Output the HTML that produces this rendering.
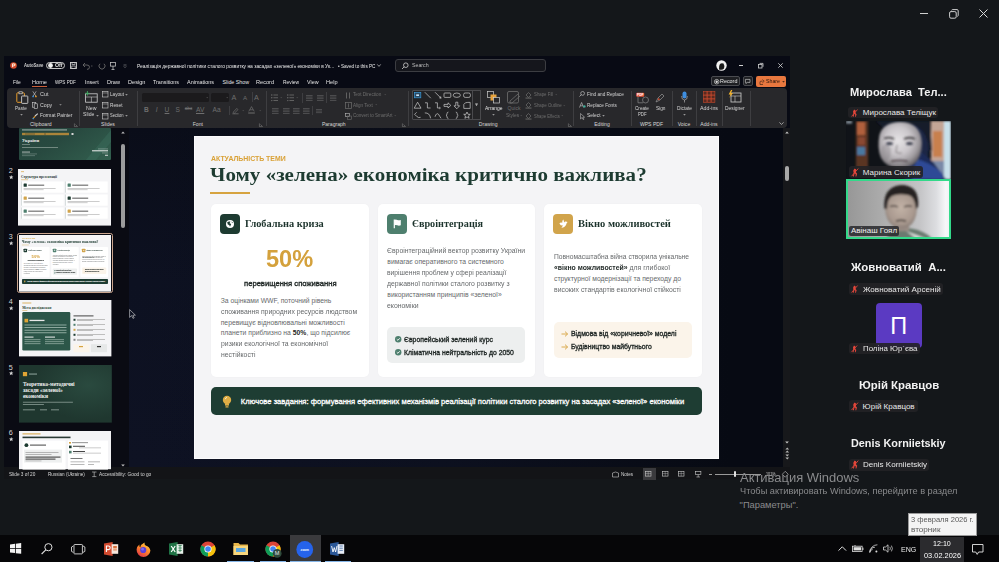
<!DOCTYPE html>
<html><head><meta charset="utf-8">
<style>
*{margin:0;padding:0;box-sizing:border-box}
html,body{width:999px;height:562px;overflow:hidden;background:#14171a;font-family:"Liberation Sans",sans-serif;position:relative}
.a{position:absolute}
.t{position:absolute;white-space:pre;line-height:1}
svg.a{overflow:visible}
</style></head><body>
<div class="a" style="left:919.80px;top:13.00px;width:8.00px;height:1.00px;background:#cfcfcf;"></div>
<svg class="a" style="left:948.50px;top:8.50px;" width="10.00" height="10.00" viewBox="0 0 10.00 10.00"><rect x="0.6" y="2.6" width="6.6" height="6.6" rx="1.4" stroke="#cfcfcf" stroke-width="1" fill="none"/><path d="M2.6 1.4 Q2.8 0.6 3.6 0.6 L8 0.6 Q9.2 0.6 9.2 1.8 L9.2 6.4 Q9.2 7.2 8.4 7.4" stroke="#cfcfcf" stroke-width="1" fill="none"/></svg>
<svg class="a" style="left:979.00px;top:9.00px;" width="9.00" height="9.00" viewBox="0 0 9.00 9.00"><path d="M0.5 0.5 L8.5 8.5 M8.5 0.5 L0.5 8.5" stroke="#d8d8d8" stroke-width="1"/></svg>
<div class="a" style="left:4.00px;top:56.00px;width:786.00px;height:413.00px;background:#080a14;"></div>
<div class="a" style="left:7.00px;top:88.00px;width:780.00px;height:40.00px;background:#28282b;border-radius:4px;"></div>
<div class="a" style="left:4.00px;top:128.00px;width:125.00px;height:341.00px;background:#0a0b13;"></div>
<div class="a" style="left:129.00px;top:128.00px;width:654.00px;height:339.00px;background:linear-gradient(90deg,rgba(8,11,21,0) 0%,rgba(8,11,21,0.3) 50%,rgba(7,10,19,1) 92%), linear-gradient(180deg,#0a0d19 0%,#0d1121 45%,#0e1223 100%);"></div>
<div class="a" style="left:783.00px;top:128.00px;width:7.00px;height:339.00px;background:#17181b;"></div>
<svg class="a" style="left:784.70px;top:131.00px;" width="4.00" height="3.00" viewBox="0 0 4.00 3.00"><path d="M0.2 2.6 L2 0.4 L3.8 2.6Z" fill="#c8c8c8"/></svg>
<div class="a" style="left:785.00px;top:165.70px;width:4.00px;height:15.40px;background:#a8a8a8;border-radius:2px;"></div>
<svg class="a" style="left:784.70px;top:440.60px;" width="4.00" height="3.00" viewBox="0 0 4.00 3.00"><path d="M0.2 0.4 L2 2.6 L3.8 0.4Z" fill="#c8c8c8"/></svg>
<svg class="a" style="left:784.50px;top:446.50px;" width="4.50" height="6.00" viewBox="0 0 4.50 6.00"><path d="M0.4 2.4 L2.25 0.4 L4.1 2.4Z M0.4 5.6 L2.25 3.6 L4.1 5.6Z" fill="#b8b8b8"/></svg>
<svg class="a" style="left:784.50px;top:453.50px;" width="4.50" height="6.00" viewBox="0 0 4.50 6.00"><path d="M0.4 0.4 L2.25 2.4 L4.1 0.4Z M0.4 3.6 L2.25 5.6 L4.1 3.6Z" fill="#b8b8b8"/></svg>
<div class="a" style="left:4.00px;top:467.00px;width:786.00px;height:12.00px;background:#131417;"></div>
<svg class="a" style="left:10.40px;top:62.00px;" width="7.00" height="7.00" viewBox="0 0 7.00 7.00"><circle cx="3.5" cy="3.5" r="3.3" fill="#d24a2c"/><circle cx="4.6" cy="2.6" r="1.4" fill="#f08a4a"/><path d="M2.5 1.8 L2.5 5.2 M2.5 1.8 L3.8 1.8 Q4.8 1.8 4.8 2.9 Q4.8 3.9 3.8 3.9 L2.5 3.9" stroke="#fff" stroke-width="0.8" fill="none"/></svg>
<div class="t" style="left:24.00px;top:62.98px;font-size:5.10px;color:#d0d0d0;font-weight:700;transform:scaleX(0.8205);transform-origin:0 0;">AutoSave</div>
<div class="a" style="left:46.20px;top:61.50px;width:18.80px;height:7.80px;background:#0b0c12;border:1px solid #c8c8c8;border-radius:4px;"></div>
<svg class="a" style="left:47.80px;top:62.90px;" width="5.00" height="5.00" viewBox="0 0 5.00 5.00"><circle cx="2.5" cy="2.5" r="2.4" fill="#f0f0f0"/></svg>
<div class="t" style="left:54.60px;top:63.07px;font-size:5.00px;color:#e0e0e0;font-weight:700;transform:scaleX(1.0527);transform-origin:0 0;">Off</div>
<svg class="a" style="left:70.30px;top:62.00px;" width="7.00" height="7.00" viewBox="0 0 7.00 7.00"><rect x="0.5" y="0.5" width="6" height="6" stroke="#cfcfcf" stroke-width="0.9" fill="none"/><rect x="2" y="0.5" width="3" height="2" stroke="#cfcfcf" stroke-width="0.7" fill="none"/><rect x="1.8" y="4" width="3.4" height="2.5" stroke="#cfcfcf" stroke-width="0.7" fill="none"/></svg>
<svg class="a" style="left:82.00px;top:61.50px;" width="11.00" height="8.00" viewBox="0 0 11.00 8.00"><path d="M3 1 L1 3 L3 5 M1 3 L5 3 Q7.5 3 7.5 5.2 Q7.5 7.4 5 7.4" stroke="#6a6a6a" stroke-width="0.9" fill="none"/><path d="M9 4 L10.5 4" stroke="#6a6a6a" stroke-width="0.7"/></svg>
<svg class="a" style="left:97.50px;top:61.50px;" width="8.00" height="8.00" viewBox="0 0 8.00 8.00"><path d="M6 1.8 A3 3 0 1 1 2 1.8" stroke="#6a6a6a" stroke-width="0.9" fill="none"/></svg>
<svg class="a" style="left:110.00px;top:61.50px;" width="6.00" height="8.00" viewBox="0 0 6.00 8.00"><rect x="0.5" y="0.5" width="5" height="3.6" stroke="#bdbdbd" stroke-width="0.8" fill="none"/><path d="M3 4 L3 7.5 M1.5 7.5 L4.5 7.5" stroke="#bdbdbd" stroke-width="0.8"/></svg>
<svg class="a" style="left:123.00px;top:63.50px;" width="4.00" height="4.00" viewBox="0 0 4.00 4.00"><path d="M0.5 1 L3.5 1 M0.8 2.4 L2 3.6 L3.2 2.4" stroke="#9a9a9a" stroke-width="0.6" fill="none"/></svg>
<div class="t" style="left:136.60px;top:63.78px;font-size:5.10px;color:#ececec;transform:scaleX(0.9579);transform-origin:0 0;">Реалізація державної політики сталого розвитку на засадах «зеленої» економіки в Ук...</div>
<div class="t" style="left:337.50px;top:63.78px;font-size:5.10px;color:#ececec;transform:scaleX(0.9104);transform-origin:0 0;">• Saved to this PC</div>
<svg class="a" style="left:376.50px;top:63.80px;" width="4.00" height="3.00" viewBox="0 0 4.00 3.00"><path d="M0.3 0.4 L2 2.4 L3.7 0.4" stroke="#cfcfcf" stroke-width="0.7" fill="none"/></svg>
<div class="a" style="left:395.00px;top:59.00px;width:150.50px;height:13.00px;background:#15161c;border:1px solid #3c3d42;border-radius:3px;"></div>
<svg class="a" style="left:400.50px;top:62.00px;" width="8.00" height="8.00" viewBox="0 0 8.00 8.00"><circle cx="4.8" cy="3.2" r="2.3" stroke="#cfcfcf" stroke-width="0.8" fill="none"/><path d="M3.2 4.8 L1 7" stroke="#cfcfcf" stroke-width="0.8"/></svg>
<div class="t" style="left:412.00px;top:63.31px;font-size:5.30px;color:#bdbdbd;transform:scaleX(0.9885);transform-origin:0 0;">Search</div>
<svg class="a" style="left:716.00px;top:60.00px;" width="11.00" height="11.00" viewBox="0 0 11.00 11.00"><circle cx="5.5" cy="5.5" r="5.2" fill="#f2f2f2"/><path d="M3 9.5 Q2.5 6 4 4 Q5.5 2.5 7.5 3.6 Q8.8 5.4 8 8.6 Q6.5 10.4 3 9.5Z" fill="#1a1a1a"/></svg>
<div class="a" style="left:738.70px;top:65.00px;width:4.50px;height:0.90px;background:#d0d0d0;"></div>
<svg class="a" style="left:757.50px;top:62.50px;" width="5.50" height="5.50" viewBox="0 0 5.50 5.50"><rect x="0.4" y="1.4" width="3.6" height="3.6" stroke="#d0d0d0" stroke-width="0.8" fill="none"/><path d="M1.6 0.4 L5 0.4 L5 3.8" stroke="#d0d0d0" stroke-width="0.8" fill="none"/></svg>
<svg class="a" style="left:777.60px;top:62.50px;" width="5.00" height="5.00" viewBox="0 0 5.00 5.00"><path d="M0.3 0.3 L4.7 4.7 M4.7 0.3 L0.3 4.7" stroke="#d8d8d8" stroke-width="0.8"/></svg>
<div class="a" style="left:711.00px;top:76.40px;width:28.60px;height:10.00px;background:#1e1f23;border:1px solid #4a4b50;border-radius:2px;"></div>
<svg class="a" style="left:714.00px;top:78.60px;" width="5.00" height="5.40" viewBox="0 0 5.00 5.40"><circle cx="2.7" cy="2.7" r="2.3" stroke="#d8d8d8" stroke-width="0.7" fill="none"/><circle cx="2.7" cy="2.7" r="1.2" fill="#d8d8d8"/></svg>
<div class="t" style="left:720.40px;top:79.18px;font-size:5.10px;color:#e8e8e8;transform:scaleX(1.0584);transform-origin:0 0;">Record</div>
<div class="a" style="left:743.00px;top:76.40px;width:9.80px;height:10.00px;background:#1e1f23;border:1px solid #4a4b50;border-radius:2px;"></div>
<svg class="a" style="left:745.20px;top:78.80px;" width="5.00" height="5.00" viewBox="0 0 5.00 5.00"><path d="M0.4 0.4 L5 0.4 L5 3.4 L2.2 3.4 L0.9 4.6 L0.9 3.4 L0.4 3.4Z" stroke="#d8d8d8" stroke-width="0.6" fill="none"/></svg>
<div class="a" style="left:756.00px;top:76.20px;width:30.20px;height:10.60px;background:#e8773f;border-radius:2px;"></div>
<svg class="a" style="left:758.50px;top:78.60px;" width="6.00" height="6.00" viewBox="0 0 6.00 6.00"><path d="M1 5.5 L1 3 Q1 2.2 2 2.2 L3.6 2.2 M3.4 0.6 L5.2 2.2 L3.4 3.8 M4 5.5 L1 5.5" stroke="#2a1a10" stroke-width="0.6" fill="none"/></svg>
<div class="t" style="left:765.50px;top:79.28px;font-size:5.10px;color:#22140c;transform:scaleX(1.0287);transform-origin:0 0;">Share</div>
<svg class="a" style="left:781.50px;top:80.80px;" width="3.00" height="2.00" viewBox="0 0 3.00 2.00"><path d="M0.2 0.3 L1.5 1.6 L2.8 0.3Z" fill="#22140c"/></svg>
<div class="t" style="left:13.00px;top:79.81px;font-size:5.30px;color:#e4e4e4;transform:scaleX(0.9133);transform-origin:0 0;">File</div>
<div class="t" style="left:31.90px;top:79.81px;font-size:5.30px;color:#e4e4e4;transform:scaleX(1.0539);transform-origin:0 0;">Home</div>
<div class="t" style="left:55.30px;top:79.81px;font-size:5.30px;color:#e4e4e4;transform:scaleX(0.8615);transform-origin:0 0;">WPS PDF</div>
<div class="t" style="left:85.20px;top:79.81px;font-size:5.30px;color:#e4e4e4;transform:scaleX(1.0336);transform-origin:0 0;">Insert</div>
<div class="t" style="left:106.70px;top:79.81px;font-size:5.30px;color:#e4e4e4;transform:scaleX(1.0511);transform-origin:0 0;">Draw</div>
<div class="t" style="left:127.50px;top:79.81px;font-size:5.30px;color:#e4e4e4;transform:scaleX(1.0607);transform-origin:0 0;">Design</div>
<div class="t" style="left:152.50px;top:79.81px;font-size:5.30px;color:#e4e4e4;transform:scaleX(1.0107);transform-origin:0 0;">Transitions</div>
<div class="t" style="left:186.50px;top:79.81px;font-size:5.30px;color:#e4e4e4;transform:scaleX(1.0298);transform-origin:0 0;">Animations</div>
<div class="t" style="left:222.50px;top:79.81px;font-size:5.30px;color:#e4e4e4;">Slide Show</div>
<div class="t" style="left:256.00px;top:79.81px;font-size:5.30px;color:#e4e4e4;transform:scaleX(1.0535);transform-origin:0 0;">Record</div>
<div class="t" style="left:282.50px;top:79.81px;font-size:5.30px;color:#e4e4e4;transform:scaleX(0.9207);transform-origin:0 0;">Review</div>
<div class="t" style="left:307.00px;top:79.81px;font-size:5.30px;color:#e4e4e4;transform:scaleX(1.0095);transform-origin:0 0;">View</div>
<div class="t" style="left:325.50px;top:79.81px;font-size:5.30px;color:#e4e4e4;transform:scaleX(1.0550);transform-origin:0 0;">Help</div>
<div class="a" style="left:32.00px;top:85.60px;width:14.80px;height:1.30px;background:#c9603a;"></div>
<div class="t" style="left:29.89px;top:121.88px;font-size:5.10px;color:#d8d8d8;">Clipboard</div>
<div class="t" style="left:101.05px;top:121.88px;font-size:5.10px;color:#d8d8d8;">Slides</div>
<div class="t" style="left:192.70px;top:121.88px;font-size:5.10px;color:#d8d8d8;">Font</div>
<div class="t" style="left:321.89px;top:121.88px;font-size:5.10px;color:#d8d8d8;">Paragraph</div>
<div class="t" style="left:478.85px;top:121.88px;font-size:5.10px;color:#d8d8d8;">Drawing</div>
<div class="t" style="left:594.20px;top:121.88px;font-size:5.10px;color:#d8d8d8;">Editing</div>
<div class="t" style="left:639.88px;top:121.88px;font-size:5.10px;color:#d8d8d8;">WPS PDF</div>
<div class="t" style="left:677.76px;top:121.88px;font-size:5.10px;color:#d8d8d8;">Voice</div>
<div class="t" style="left:700.35px;top:121.88px;font-size:5.10px;color:#d8d8d8;">Add-ins</div>
<div class="a" style="left:78.80px;top:91.00px;width:0.80px;height:35.00px;background:#3e3e41;"></div>
<div class="a" style="left:137.30px;top:91.00px;width:0.80px;height:35.00px;background:#3e3e41;"></div>
<div class="a" style="left:265.50px;top:91.00px;width:0.80px;height:35.00px;background:#3e3e41;"></div>
<div class="a" style="left:407.80px;top:91.00px;width:0.80px;height:35.00px;background:#3e3e41;"></div>
<div class="a" style="left:573.30px;top:91.00px;width:0.80px;height:35.00px;background:#3e3e41;"></div>
<div class="a" style="left:630.60px;top:91.00px;width:0.80px;height:35.00px;background:#3e3e41;"></div>
<div class="a" style="left:672.40px;top:91.00px;width:0.80px;height:35.00px;background:#3e3e41;"></div>
<div class="a" style="left:695.50px;top:91.00px;width:0.80px;height:35.00px;background:#3e3e41;"></div>
<div class="a" style="left:722.00px;top:91.00px;width:0.80px;height:35.00px;background:#3e3e41;"></div>
<div class="a" style="left:749.50px;top:91.00px;width:0.80px;height:35.00px;background:#3e3e41;"></div>
<svg class="a" style="left:73.60px;top:122.60px;" width="4.00" height="4.00" viewBox="0 0 4.00 4.00"><path d="M0.4 0.4 L0.4 3.6 L3.6 3.6 M1.5 1.5 L3.4 3.4" stroke="#8a8a8a" stroke-width="0.5" fill="none"/></svg>
<svg class="a" style="left:258.50px;top:122.60px;" width="4.00" height="4.00" viewBox="0 0 4.00 4.00"><path d="M0.4 0.4 L0.4 3.6 L3.6 3.6 M1.5 1.5 L3.4 3.4" stroke="#8a8a8a" stroke-width="0.5" fill="none"/></svg>
<svg class="a" style="left:402.40px;top:122.60px;" width="4.00" height="4.00" viewBox="0 0 4.00 4.00"><path d="M0.4 0.4 L0.4 3.6 L3.6 3.6 M1.5 1.5 L3.4 3.4" stroke="#8a8a8a" stroke-width="0.5" fill="none"/></svg>
<svg class="a" style="left:568.00px;top:122.60px;" width="4.00" height="4.00" viewBox="0 0 4.00 4.00"><path d="M0.4 0.4 L0.4 3.6 L3.6 3.6 M1.5 1.5 L3.4 3.4" stroke="#8a8a8a" stroke-width="0.5" fill="none"/></svg>
<svg class="a" style="left:15.50px;top:91.00px;" width="13.00" height="13.00" viewBox="0 0 13.00 13.00"><rect x="0.8" y="1.8" width="7.6" height="9.5" rx="0.8" stroke="#e39a2c" stroke-width="1" fill="none"/><rect x="3" y="0.8" width="3.2" height="2" fill="#28282b" stroke="#cfcfcf" stroke-width="0.7"/><rect x="5.6" y="5" width="6.2" height="7.4" rx="0.6" fill="#28282b" stroke="#cfcfcf" stroke-width="0.9"/></svg>
<div class="t" style="left:15.00px;top:105.78px;font-size:5.10px;color:#d6d6d6;transform:scaleX(0.9048);transform-origin:0 0;">Paste</div>
<svg class="a" style="left:19.60px;top:114.20px;" width="3.00" height="2.00" viewBox="0 0 3.00 2.00"><path d="M0.2 0.3 L1.5 1.6 L2.8 0.3Z" fill="#bdbdbd"/></svg>
<svg class="a" style="left:32.00px;top:91.20px;" width="5.00" height="6.50" viewBox="0 0 5.00 6.50"><path d="M0.8 0.3 L3.8 5 M4.2 0.3 L1.2 5" stroke="#cfcfcf" stroke-width="0.6"/><circle cx="1.1" cy="5.4" r="0.9" fill="#3a8fd8"/><circle cx="3.9" cy="5.4" r="0.9" fill="#e39a2c"/></svg>
<div class="t" style="left:39.80px;top:92.08px;font-size:5.10px;color:#d6d6d6;transform:scaleX(1.0584);transform-origin:0 0;">Cut</div>
<svg class="a" style="left:31.80px;top:101.80px;" width="6.00" height="7.00" viewBox="0 0 6.00 7.00"><rect x="0.4" y="0.4" width="3.4" height="4.8" stroke="#cfcfcf" stroke-width="0.6" fill="none"/><rect x="2.2" y="1.8" width="3.4" height="4.8" fill="#28282b" stroke="#cfcfcf" stroke-width="0.6"/></svg>
<div class="t" style="left:39.80px;top:102.88px;font-size:5.10px;color:#d6d6d6;transform:scaleX(1.0247);transform-origin:0 0;">Copy</div>
<svg class="a" style="left:59.00px;top:104.40px;" width="3.00" height="2.00" viewBox="0 0 3.00 2.00"><path d="M0.2 0.3 L1.5 1.6 L2.8 0.3Z" fill="#9a9a9a"/></svg>
<svg class="a" style="left:31.80px;top:112.60px;" width="6.50" height="6.50" viewBox="0 0 6.50 6.50"><path d="M1 5.6 L3.2 3.2" stroke="#e39a2c" stroke-width="1.2"/><path d="M3 3 L5.8 0.6" stroke="#cfcfcf" stroke-width="1.1"/><circle cx="1.2" cy="5.6" r="0.8" fill="#3a8fd8"/></svg>
<div class="t" style="left:39.80px;top:113.48px;font-size:5.10px;color:#d6d6d6;transform:scaleX(0.9636);transform-origin:0 0;">Format Painter</div>
<svg class="a" style="left:84.50px;top:90.50px;" width="13.00" height="12.00" viewBox="0 0 13.00 12.00"><rect x="0.6" y="2.8" width="11.6" height="8.4" stroke="#cfcfcf" stroke-width="0.8" fill="none"/><path d="M0.6 6 L12.2 6 M6.4 6 L6.4 11.2" stroke="#cfcfcf" stroke-width="0.6"/><path d="M2.4 0 L2.4 4.6 M0.1 2.3 L4.7 2.3" stroke="#3fae62" stroke-width="0.9"/></svg>
<div class="t" style="left:85.60px;top:105.68px;font-size:5.10px;color:#d6d6d6;transform:scaleX(1.0194);transform-origin:0 0;">New</div>
<div class="t" style="left:83.00px;top:112.38px;font-size:5.10px;color:#d6d6d6;transform:scaleX(1.0052);transform-origin:0 0;">Slide</div>
<svg class="a" style="left:95.60px;top:114.80px;" width="3.00" height="2.00" viewBox="0 0 3.00 2.00"><path d="M0.2 0.3 L1.5 1.6 L2.8 0.3Z" fill="#bdbdbd"/></svg>
<svg class="a" style="left:101.80px;top:91.20px;" width="6.40" height="6.40" viewBox="0 0 6.40 6.40"><rect x="0.4" y="0.4" width="5.6" height="5.6" stroke="#cfcfcf" stroke-width="0.6" fill="none"/><path d="M0.4 2 L6 2" stroke="#cfcfcf" stroke-width="0.5"/></svg>
<div class="t" style="left:110.00px;top:92.08px;font-size:5.10px;color:#d6d6d6;transform:scaleX(0.9143);transform-origin:0 0;">Layout</div>
<svg class="a" style="left:125.00px;top:93.80px;" width="3.00" height="2.00" viewBox="0 0 3.00 2.00"><path d="M0.2 0.3 L1.5 1.6 L2.8 0.3Z" fill="#bdbdbd"/></svg>
<svg class="a" style="left:101.80px;top:101.90px;" width="6.40" height="6.40" viewBox="0 0 6.40 6.40"><rect x="0.4" y="0.4" width="5.6" height="5.6" stroke="#cfcfcf" stroke-width="0.6" fill="none"/><path d="M0.4 2 L6 2" stroke="#cfcfcf" stroke-width="0.5"/></svg>
<div class="t" style="left:110.00px;top:102.78px;font-size:5.10px;color:#d6d6d6;transform:scaleX(0.9382);transform-origin:0 0;">Reset</div>
<svg class="a" style="left:101.80px;top:112.60px;" width="6.40" height="6.40" viewBox="0 0 6.40 6.40"><rect x="0.4" y="0.4" width="5.6" height="5.6" stroke="#cfcfcf" stroke-width="0.6" fill="none"/><path d="M0.4 2 L6 2" stroke="#cfcfcf" stroke-width="0.5"/></svg>
<div class="t" style="left:110.00px;top:113.48px;font-size:5.10px;color:#d6d6d6;transform:scaleX(0.7936);transform-origin:0 0;">Section</div>
<svg class="a" style="left:124.50px;top:115.20px;" width="3.00" height="2.00" viewBox="0 0 3.00 2.00"><path d="M0.2 0.3 L1.5 1.6 L2.8 0.3Z" fill="#bdbdbd"/></svg>
<div class="a" style="left:142.00px;top:93.00px;width:66.80px;height:8.70px;background:#1b1a1c;border-radius:1.5px;"></div>
<div class="a" style="left:211.40px;top:93.00px;width:17.30px;height:8.70px;background:#1b1a1c;border-radius:1.5px;"></div>
<svg class="a" style="left:205.50px;top:96.60px;" width="2.50" height="1.60" viewBox="0 0 2.50 1.60"><path d="M0.2 0.2 L1.25 1.3 L2.3 0.2Z" fill="#555"/></svg>
<svg class="a" style="left:225.50px;top:96.60px;" width="2.50" height="1.60" viewBox="0 0 2.50 1.60"><path d="M0.2 0.2 L1.25 1.3 L2.3 0.2Z" fill="#555"/></svg>
<div class="t" style="left:231.50px;top:94.10px;font-size:7.20px;color:#6e6e6e;">A</div>
<div class="t" style="left:243.00px;top:94.95px;font-size:6.20px;color:#6e6e6e;">A</div>
<div class="a" style="left:251.60px;top:92.00px;width:0.60px;height:10.00px;background:#3e3e41;"></div>
<div class="t" style="left:254.00px;top:94.10px;font-size:7.20px;color:#6e6e6e;">A</div>
<div class="t" style="left:144.00px;top:107.21px;font-size:6.60px;color:#6e6e6e;font-weight:700;">B</div>
<div class="t" style="left:155.80px;top:107.21px;font-size:6.60px;color:#6e6e6e;font-style:italic;">I</div>
<div class="t" style="left:164.60px;top:107.21px;font-size:6.60px;color:#6e6e6e;text-decoration:underline;">U</div>
<div class="t" style="left:175.60px;top:107.21px;font-size:6.60px;color:#6e6e6e;">S</div>
<div class="t" style="left:184.80px;top:107.21px;font-size:6.60px;color:#6e6e6e;text-decoration:line-through;font-size:4.6px;">abc</div>
<div class="t" style="left:196.00px;top:107.21px;font-size:6.60px;color:#6e6e6e;text-decoration:underline;">AV</div>
<div class="t" style="left:212.50px;top:107.21px;font-size:6.60px;color:#6e6e6e;">Aa</div>
<div class="a" style="left:228.50px;top:106.00px;width:0.60px;height:9.00px;background:#3e3e41;"></div>
<svg class="a" style="left:232.00px;top:106.50px;" width="7.00" height="7.00" viewBox="0 0 7.00 7.00"><path d="M1 5.4 L4.8 1.4 L6 2.6 L2.2 6.4Z" stroke="#6e6e6e" stroke-width="0.7" fill="none"/><path d="M0.4 6.8 L6.6 6.8" stroke="#6e6e6e" stroke-width="0.8"/></svg>
<svg class="a" style="left:248.00px;top:106.20px;" width="7.00" height="7.50" viewBox="0 0 7.00 7.50"><path d="M0.8 5.4 L3.5 0.6 L6.2 5.4 M1.8 3.8 L5.2 3.8" stroke="#6e6e6e" stroke-width="0.7" fill="none"/><path d="M0.2 7 L6.8 7" stroke="#6e6e6e" stroke-width="1"/></svg>
<svg class="a" style="left:242.20px;top:109.80px;" width="2.50" height="1.60" viewBox="0 0 2.50 1.60"><path d="M0.2 0.2 L1.25 1.3 L2.3 0.2Z" fill="#555"/></svg>
<svg class="a" style="left:259.00px;top:109.80px;" width="2.50" height="1.60" viewBox="0 0 2.50 1.60"><path d="M0.2 0.2 L1.25 1.3 L2.3 0.2Z" fill="#555"/></svg>
<svg class="a" style="left:270.80px;top:94.00px;" width="7.00" height="8.00" viewBox="0 0 7.00 8.00"><circle cx="0.8" cy="1" r="0.7" fill="#6e6e6e"/><circle cx="0.8" cy="3.8" r="0.7" fill="#6e6e6e"/><circle cx="0.8" cy="6.6" r="0.7" fill="#6e6e6e"/><rect x="2.4" y="0.6" width="4.6" height="0.8" fill="#6e6e6e"/><rect x="2.4" y="3.4" width="4.6" height="0.8" fill="#6e6e6e"/><rect x="2.4" y="6.2" width="4.6" height="0.8" fill="#6e6e6e"/></svg>
<svg class="a" style="left:280.00px;top:97.40px;" width="2.50" height="1.60" viewBox="0 0 2.50 1.60"><path d="M0.2 0.2 L1.25 1.3 L2.3 0.2Z" fill="#555"/></svg>
<svg class="a" style="left:287.00px;top:94.00px;" width="7.00" height="8.00" viewBox="0 0 7.00 8.00"><circle cx="0.8" cy="1" r="0.7" fill="#6e6e6e"/><circle cx="0.8" cy="3.8" r="0.7" fill="#6e6e6e"/><circle cx="0.8" cy="6.6" r="0.7" fill="#6e6e6e"/><rect x="2.4" y="0.6" width="4.6" height="0.8" fill="#6e6e6e"/><rect x="2.4" y="3.4" width="4.6" height="0.8" fill="#6e6e6e"/><rect x="2.4" y="6.2" width="4.6" height="0.8" fill="#6e6e6e"/></svg>
<svg class="a" style="left:296.20px;top:97.40px;" width="2.50" height="1.60" viewBox="0 0 2.50 1.60"><path d="M0.2 0.2 L1.25 1.3 L2.3 0.2Z" fill="#555"/></svg>
<div class="a" style="left:302.00px;top:93.00px;width:0.60px;height:10.00px;background:#3e3e41;"></div>
<svg class="a" style="left:306.00px;top:95.00px;" width="6.60" height="6.80" viewBox="0 0 6.60 6.80"><rect x="0.0" y="0.0" width="6.6" height="0.7" fill="#5c5c5e"/><rect x="0.0" y="1.7" width="6.6" height="0.7" fill="#5c5c5e"/><rect x="0.0" y="3.4" width="6.6" height="0.7" fill="#5c5c5e"/><rect x="0.0" y="5.1" width="6.6" height="0.7" fill="#5c5c5e"/></svg>
<svg class="a" style="left:316.50px;top:95.00px;" width="6.60" height="6.80" viewBox="0 0 6.60 6.80"><rect x="0.0" y="0.0" width="6.6" height="0.7" fill="#5c5c5e"/><rect x="0.0" y="1.7" width="6.6" height="0.7" fill="#5c5c5e"/><rect x="0.0" y="3.4" width="6.6" height="0.7" fill="#5c5c5e"/><rect x="0.0" y="5.1" width="6.6" height="0.7" fill="#5c5c5e"/></svg>
<div class="a" style="left:325.50px;top:92.00px;width:0.60px;height:11.00px;background:#3e3e41;"></div>
<svg class="a" style="left:329.60px;top:95.00px;" width="6.40" height="6.80" viewBox="0 0 6.40 6.80"><rect x="0.0" y="0.0" width="6.4" height="0.7" fill="#5c5c5e"/><rect x="0.0" y="1.7" width="6.4" height="0.7" fill="#5c5c5e"/><rect x="0.0" y="3.4" width="6.4" height="0.7" fill="#5c5c5e"/><rect x="0.0" y="5.1" width="6.4" height="0.7" fill="#5c5c5e"/></svg>
<svg class="a" style="left:271.50px;top:107.80px;" width="6.60" height="6.80" viewBox="0 0 6.60 6.80"><rect x="0.0" y="0.0" width="6.6" height="0.7" fill="#5c5c5e"/><rect x="0.0" y="1.7" width="6.6" height="0.7" fill="#5c5c5e"/><rect x="0.0" y="3.4" width="6.6" height="0.7" fill="#5c5c5e"/><rect x="0.0" y="5.1" width="6.6" height="0.7" fill="#5c5c5e"/></svg>
<svg class="a" style="left:282.50px;top:107.80px;" width="6.60" height="6.80" viewBox="0 0 6.60 6.80"><rect x="0.0" y="0.0" width="6.6" height="0.7" fill="#5c5c5e"/><rect x="0.0" y="1.7" width="6.6" height="0.7" fill="#5c5c5e"/><rect x="0.0" y="3.4" width="6.6" height="0.7" fill="#5c5c5e"/><rect x="0.0" y="5.1" width="6.6" height="0.7" fill="#5c5c5e"/></svg>
<svg class="a" style="left:292.50px;top:107.80px;" width="6.60" height="6.80" viewBox="0 0 6.60 6.80"><rect x="0.0" y="0.0" width="6.6" height="0.7" fill="#5c5c5e"/><rect x="0.0" y="1.7" width="6.6" height="0.7" fill="#5c5c5e"/><rect x="0.0" y="3.4" width="6.6" height="0.7" fill="#5c5c5e"/><rect x="0.0" y="5.1" width="6.6" height="0.7" fill="#5c5c5e"/></svg>
<svg class="a" style="left:303.00px;top:107.80px;" width="6.60" height="6.80" viewBox="0 0 6.60 6.80"><rect x="0.0" y="0.0" width="6.6" height="0.7" fill="#5c5c5e"/><rect x="0.0" y="1.7" width="6.6" height="0.7" fill="#5c5c5e"/><rect x="0.0" y="3.4" width="6.6" height="0.7" fill="#5c5c5e"/><rect x="0.0" y="5.1" width="6.6" height="0.7" fill="#5c5c5e"/></svg>
<div class="a" style="left:312.00px;top:106.00px;width:0.60px;height:9.00px;background:#3e3e41;"></div>
<svg class="a" style="left:315.50px;top:108.60px;" width="6.00" height="5.10" viewBox="0 0 6.00 5.10"><rect x="0.0" y="0.0" width="6.0" height="0.7" fill="#5c5c5e"/><rect x="0.0" y="1.7" width="6.0" height="0.7" fill="#5c5c5e"/><rect x="0.0" y="3.4" width="6.0" height="0.7" fill="#5c5c5e"/></svg>
<svg class="a" style="left:345.00px;top:91.50px;" width="6.00" height="7.00" viewBox="0 0 6.00 7.00"><path d="M1.5 0.5 L1.5 6.5 M4.5 0.5 L4.5 6.5" stroke="#6e6e6e" stroke-width="0.8"/></svg>
<div class="t" style="left:353.30px;top:92.48px;font-size:5.10px;color:#6e6e6e;transform:scaleX(0.9160);transform-origin:0 0;">Text Direction</div>
<svg class="a" style="left:383.50px;top:94.20px;" width="2.50" height="1.60" viewBox="0 0 2.50 1.60"><path d="M0.2 0.2 L1.25 1.3 L2.3 0.2Z" fill="#555"/></svg>
<svg class="a" style="left:345.00px;top:102.00px;" width="7.00" height="7.00" viewBox="0 0 7.00 7.00"><rect x="0.5" y="0.5" width="6" height="6" stroke="#6e6e6e" stroke-width="0.7" fill="none"/><path d="M3.5 1.5 L3.5 5.5" stroke="#6e6e6e" stroke-width="0.7"/></svg>
<div class="t" style="left:353.30px;top:102.68px;font-size:5.10px;color:#6e6e6e;transform:scaleX(0.8947);transform-origin:0 0;">Align Text</div>
<svg class="a" style="left:374.60px;top:104.40px;" width="2.50" height="1.60" viewBox="0 0 2.50 1.60"><path d="M0.2 0.2 L1.25 1.3 L2.3 0.2Z" fill="#555"/></svg>
<svg class="a" style="left:345.00px;top:112.50px;" width="7.00" height="7.00" viewBox="0 0 7.00 7.00"><rect x="0.5" y="0.5" width="4" height="3" stroke="#bbb" stroke-width="0.6" fill="none"/><rect x="2.5" y="3" width="4" height="3.4" stroke="#6e6e6e" stroke-width="0.6" fill="none"/></svg>
<div class="t" style="left:353.30px;top:113.48px;font-size:5.10px;color:#6e6e6e;transform:scaleX(0.8788);transform-origin:0 0;">Convert to SmartArt</div>
<svg class="a" style="left:394.40px;top:115.20px;" width="2.50" height="1.60" viewBox="0 0 2.50 1.60"><path d="M0.2 0.2 L1.25 1.3 L2.3 0.2Z" fill="#555"/></svg>
<div class="a" style="left:412.20px;top:90.10px;width:69.20px;height:30.30px;background:#222224;border:0.8px solid #4a4a4d;border-radius:1px;"></div>
<div class="a" style="left:472.00px;top:90.10px;width:9.40px;height:30.30px;background:#252527;border:0.8px solid #4a4a4d;"></div>
<svg class="a" style="left:475.30px;top:104.20px;" width="3.00" height="2.40" viewBox="0 0 3.00 2.40"><path d="M0.2 0.3 L2.8 0.3 L1.5 2Z" fill="#cfcfcf"/><rect x="0.2" y="-1" width="2.6" height="0.5" fill="#cfcfcf"/></svg>
<svg class="a" style="left:412.00px;top:90.00px;" width="60.00" height="30.00" viewBox="0 0 60.00 30.00"><g transform="translate(5.6 5.2)"><rect x="-3.2" y="-2.6" width="6.4" height="5.2" stroke="#3a9ad9" stroke-width="0.7" fill="#2b4a63"/><rect x="-1.4" y="-0.8" width="2.8" height="1.6" fill="#cfe6f8"/></g><g transform="translate(15.8 5.2)"><path d="M-3 -3 L3 3" stroke="#cfcfcf" stroke-width="0.7"/></g><g transform="translate(26.0 5.2)"><path d="M-3 -3 L3 3 M3 3 L1.2 2.6 M3 3 L2.6 1.2" stroke="#cfcfcf" stroke-width="0.7" fill="none"/></g><g transform="translate(35.4 5.2)"><rect x="-3.4" y="-2.2" width="6.8" height="4.4" rx="0.8" stroke="#cfcfcf" stroke-width="0.7" fill="none"/></g><g transform="translate(44.8 5.2)"><ellipse cx="0" cy="0" rx="3.6" ry="2.2" stroke="#cfcfcf" stroke-width="0.7" fill="none"/></g><g transform="translate(55.0 5.2)"><rect x="-3.4" y="-2.2" width="6.8" height="4.4" rx="1.6" stroke="#cfcfcf" stroke-width="0.7" fill="none"/></g><g transform="translate(5.6 15.4)"><path d="M0 -3.2 L3.4 2.8 L-3.4 2.8Z" stroke="#cfcfcf" stroke-width="0.7" fill="none"/></g><g transform="translate(15.8 15.4)"><path d="M-2.8 -2.6 L-0.4 -2.6 L-0.4 2.6 L2.8 2.6" stroke="#cfcfcf" stroke-width="0.7" fill="none"/></g><g transform="translate(26.0 15.4)"><path d="M-3 -2.6 L-0.6 -2.6 L-0.6 2.6 L2.2 2.6 M1.4 1.8 L2.4 2.6 L1.4 3.4" stroke="#cfcfcf" stroke-width="0.7" fill="none"/></g><g transform="translate(35.4 15.4)"><path d="M-3.4 -1 L0.6 -1 L0.6 -2.6 L3.4 0 L0.6 2.6 L0.6 1 L-3.4 1Z" stroke="#cfcfcf" stroke-width="0.7" fill="none"/></g><g transform="translate(44.8 15.4)"><path d="M-1 -3.2 L1 -3.2 L1 0.4 L2.8 0.4 L0 3.4 L-2.8 0.4 L-1 0.4Z" stroke="#cfcfcf" stroke-width="0.7" fill="none"/></g><g transform="translate(55.0 15.4)"><path d="M-3.2 -1 Q-2 -3.2 0.8 -3 L3.2 -3 L3.2 3 L-3.2 3Z" stroke="#cfcfcf" stroke-width="0.7" fill="none"/></g><g transform="translate(5.6 25.3)"><path d="M-3 -1 L-1 -3 M-3 -1 L-1 1 Q1 3 3 2" stroke="#cfcfcf" stroke-width="0.7" fill="none"/></g><g transform="translate(15.8 25.3)"><path d="M-3 -2.4 Q2 -2.6 2.8 3" stroke="#cfcfcf" stroke-width="0.7" fill="none"/></g><g transform="translate(26.0 25.3)"><path d="M-3 1.5 Q-1.5 -3 0.5 -1 Q2 1.5 3 3" stroke="#cfcfcf" stroke-width="0.7" fill="none"/></g><g transform="translate(35.4 25.3)"><path d="M1 -3.2 Q-0.4 -3.2 -0.4 -1.6 L-0.4 -0.8 L-1.4 0 L-0.4 0.8 L-0.4 1.6 Q-0.4 3.2 1 3.2" stroke="#cfcfcf" stroke-width="0.7" fill="none"/></g><g transform="translate(44.8 25.3)"><path d="M-1 -3.2 Q0.4 -3.2 0.4 -1.6 L0.4 -0.8 L1.4 0 L0.4 0.8 L0.4 1.6 Q0.4 3.2 -1 3.2" stroke="#cfcfcf" stroke-width="0.7" fill="none"/></g><g transform="translate(55.0 25.3)"><path d="M0 -3.3 L1 -1 L3.3 -1 L1.5 0.6 L2.1 3 L0 1.6 L-2.1 3 L-1.5 0.6 L-3.3 -1 L-1 -1Z" stroke="#cfcfcf" stroke-width="0.7" fill="none"/></g></svg>
<svg class="a" style="left:487.00px;top:91.00px;" width="13.50" height="12.50" viewBox="0 0 13.50 12.50"><rect x="0.5" y="0.5" width="6" height="6" fill="#28282b" stroke="#cfcfcf" stroke-width="0.7"/><rect x="3.5" y="3.5" width="6" height="6" fill="#e8a33c"/><rect x="6.5" y="6.5" width="6" height="5.5" fill="#28282b" stroke="#cfcfcf" stroke-width="0.7"/></svg>
<div class="t" style="left:484.80px;top:105.51px;font-size:5.30px;color:#e0e0e0;transform:scaleX(0.9334);transform-origin:0 0;">Arrange</div>
<svg class="a" style="left:492.30px;top:114.00px;" width="3.00" height="2.00" viewBox="0 0 3.00 2.00"><path d="M0.2 0.3 L1.5 1.6 L2.8 0.3Z" fill="#bdbdbd"/></svg>
<svg class="a" style="left:507.00px;top:91.00px;" width="14.00" height="12.50" viewBox="0 0 14.00 12.50"><rect x="0.5" y="0.5" width="11" height="11.5" rx="1.5" stroke="#6e6e6e" stroke-width="0.8" fill="none"/><path d="M13 5 L5 12 L3 12 L3 10 L11 3" stroke="#6e6e6e" stroke-width="0.8" fill="none"/></svg>
<div class="t" style="left:507.50px;top:105.68px;font-size:5.10px;color:#6e6e6e;">Quick</div>
<div class="t" style="left:505.50px;top:112.68px;font-size:5.10px;color:#6e6e6e;transform:scaleX(0.9505);transform-origin:0 0;">Styles</div>
<svg class="a" style="left:519.80px;top:114.90px;" width="2.50" height="1.60" viewBox="0 0 2.50 1.60"><path d="M0.2 0.2 L1.25 1.3 L2.3 0.2Z" fill="#555"/></svg>
<svg class="a" style="left:524.60px;top:91.50px;" width="7.00" height="6.50" viewBox="0 0 7.00 6.50"><path d="M1 3 L3.5 0.5 L6 3 L3.5 5.5Z" stroke="#6e6e6e" stroke-width="0.7" fill="none"/><rect x="0.5" y="5.6" width="6" height="0.9" fill="#6e6e6e"/></svg>
<div class="t" style="left:534.20px;top:92.38px;font-size:5.10px;color:#6e6e6e;transform:scaleX(0.8510);transform-origin:0 0;">Shape Fill</div>
<svg class="a" style="left:554.50px;top:94.10px;" width="2.50" height="1.60" viewBox="0 0 2.50 1.60"><path d="M0.2 0.2 L1.25 1.3 L2.3 0.2Z" fill="#555"/></svg>
<svg class="a" style="left:524.60px;top:102.10px;" width="7.00" height="6.50" viewBox="0 0 7.00 6.50"><path d="M1 3 L3.5 0.5 L6 3 L3.5 5.5Z" stroke="#6e6e6e" stroke-width="0.7" fill="none"/><rect x="0.5" y="5.6" width="6" height="0.9" fill="#6e6e6e"/></svg>
<div class="t" style="left:534.20px;top:102.98px;font-size:5.10px;color:#6e6e6e;transform:scaleX(0.8601);transform-origin:0 0;">Shape Outline</div>
<svg class="a" style="left:563.00px;top:104.70px;" width="2.50" height="1.60" viewBox="0 0 2.50 1.60"><path d="M0.2 0.2 L1.25 1.3 L2.3 0.2Z" fill="#555"/></svg>
<svg class="a" style="left:524.60px;top:112.70px;" width="7.00" height="6.50" viewBox="0 0 7.00 6.50"><path d="M1 3 L3.5 0.5 L6 3 L3.5 5.5Z" stroke="#6e6e6e" stroke-width="0.7" fill="none"/><rect x="0.5" y="5.6" width="6" height="0.9" fill="#6e6e6e"/></svg>
<div class="t" style="left:534.20px;top:113.58px;font-size:5.10px;color:#6e6e6e;transform:scaleX(0.8149);transform-origin:0 0;">Shape Effects</div>
<svg class="a" style="left:561.00px;top:115.30px;" width="2.50" height="1.60" viewBox="0 0 2.50 1.60"><path d="M0.2 0.2 L1.25 1.3 L2.3 0.2Z" fill="#555"/></svg>
<svg class="a" style="left:579.00px;top:91.40px;" width="6.00" height="6.00" viewBox="0 0 6.00 6.00"><circle cx="3.6" cy="2.4" r="1.9" stroke="#cfcfcf" stroke-width="0.6" fill="none"/><path d="M2.4 3.6 L0.5 5.5" stroke="#cfcfcf" stroke-width="0.7"/></svg>
<div class="t" style="left:587.20px;top:92.18px;font-size:5.10px;color:#d6d6d6;transform:scaleX(0.9206);transform-origin:0 0;">Find and Replace</div>
<svg class="a" style="left:579.00px;top:102.20px;" width="7.00" height="6.00" viewBox="0 0 7.00 6.00"><path d="M0.5 5.5 L2.6 0.5 L4.7 5.5 M1.3 3.8 L3.9 3.8" stroke="#cfcfcf" stroke-width="0.6" fill="none"/><circle cx="5.4" cy="4.4" r="1.2" fill="#3fae9a"/></svg>
<div class="t" style="left:587.20px;top:102.98px;font-size:5.10px;color:#d6d6d6;transform:scaleX(0.9062);transform-origin:0 0;">Replace Fonts</div>
<svg class="a" style="left:579.50px;top:112.50px;" width="5.00" height="7.00" viewBox="0 0 5.00 7.00"><path d="M0.5 0.5 L0.5 6 L2 4.6 L3.2 6.6 L4 6.2 L2.8 4.2 L4.6 4.2Z" stroke="#cfcfcf" stroke-width="0.5" fill="none"/></svg>
<div class="t" style="left:587.20px;top:113.48px;font-size:5.10px;color:#d6d6d6;transform:scaleX(0.9595);transform-origin:0 0;">Select</div>
<svg class="a" style="left:602.00px;top:115.00px;" width="3.00" height="2.00" viewBox="0 0 3.00 2.00"><path d="M0.2 0.3 L1.5 1.6 L2.8 0.3Z" fill="#bdbdbd"/></svg>
<svg class="a" style="left:635.50px;top:91.50px;" width="13.00" height="11.50" viewBox="0 0 13.00 11.50"><circle cx="9.5" cy="8" r="3" stroke="#8a8a8a" stroke-width="0.7" fill="none"/><path d="M2 2 L2 10.8 L7 10.8" stroke="#8a8a8a" stroke-width="0.7" fill="none"/><rect x="0.2" y="0.8" width="8" height="4" rx="1" fill="#e8543a"/><text x="4.2" y="4" font-size="3.2" text-anchor="middle" fill="#fff" font-family="Liberation Sans" font-weight="700">PDF</text></svg>
<div class="t" style="left:635.40px;top:105.68px;font-size:5.10px;color:#d6d6d6;transform:scaleX(0.9080);transform-origin:0 0;">Create</div>
<div class="t" style="left:638.20px;top:112.28px;font-size:5.10px;color:#d6d6d6;transform:scaleX(0.8431);transform-origin:0 0;">PDF</div>
<svg class="a" style="left:654.80px;top:91.50px;" width="10.00" height="11.00" viewBox="0 0 10.00 11.00"><path d="M1 10 L3 6 L7 2 L9 4 L5 8Z" stroke="#8a8a8a" stroke-width="0.8" fill="none"/><circle cx="3.8" cy="7.2" r="1" fill="#c4482c"/></svg>
<div class="t" style="left:655.50px;top:105.68px;font-size:5.10px;color:#d6d6d6;transform:scaleX(0.9307);transform-origin:0 0;">Sign</div>
<svg class="a" style="left:680.50px;top:90.50px;" width="7.00" height="12.00" viewBox="0 0 7.00 12.00"><rect x="1.5" y="0.5" width="4" height="7" rx="2" fill="#3e8ee0"/><path d="M0.6 5 Q0.6 9 3.5 9 Q6.4 9 6.4 5 M3.5 9 L3.5 11.5" stroke="#bdbdbd" stroke-width="0.6" fill="none"/></svg>
<div class="t" style="left:676.80px;top:105.68px;font-size:5.10px;color:#d6d6d6;transform:scaleX(0.9450);transform-origin:0 0;">Dictate</div>
<svg class="a" style="left:682.80px;top:114.20px;" width="3.00" height="2.00" viewBox="0 0 3.00 2.00"><path d="M0.2 0.3 L1.5 1.6 L2.8 0.3Z" fill="#bdbdbd"/></svg>
<svg class="a" style="left:702.80px;top:91.00px;" width="13.00" height="12.00" viewBox="0 0 13.00 12.00"><rect x="0.5" y="0.5" width="3.4" height="3.4" stroke="#c4482c" stroke-width="0.6" fill="#5a2a20"/><rect x="0.5" y="4.3" width="3.4" height="3.4" stroke="#c4482c" stroke-width="0.6" fill="#5a2a20"/><rect x="0.5" y="8.1" width="3.4" height="3.4" stroke="#c4482c" stroke-width="0.6" fill="#5a2a20"/><rect x="4.5" y="0.5" width="3.4" height="3.4" stroke="#c4482c" stroke-width="0.6" fill="#5a2a20"/><rect x="4.5" y="4.3" width="3.4" height="3.4" stroke="#c4482c" stroke-width="0.6" fill="#5a2a20"/><rect x="4.5" y="8.1" width="3.4" height="3.4" stroke="#c4482c" stroke-width="0.6" fill="#5a2a20"/><rect x="8.5" y="0.5" width="3.4" height="3.4" stroke="#c4482c" stroke-width="0.6" fill="#5a2a20"/><rect x="8.5" y="4.3" width="3.4" height="3.4" stroke="#c4482c" stroke-width="0.6" fill="#5a2a20"/><rect x="8.5" y="8.1" width="3.4" height="3.4" stroke="#c4482c" stroke-width="0.6" fill="#5a2a20"/></svg>
<div class="t" style="left:700.00px;top:105.68px;font-size:5.10px;color:#d6d6d6;transform:scaleX(1.0409);transform-origin:0 0;">Add-ins</div>
<svg class="a" style="left:728.40px;top:90.00px;" width="14.00" height="12.50" viewBox="0 0 14.00 12.50"><rect x="3" y="3" width="10" height="9" stroke="#cfcfcf" stroke-width="0.8" fill="none"/><path d="M3 6 L13 6 M7 6 L7 12" stroke="#cfcfcf" stroke-width="0.6"/><path d="M3 0 L0.6 4.4 L2.6 4.4 L1.2 8 L5 3 L3 3 L4.4 0Z" fill="#f0b12c"/></svg>
<div class="t" style="left:725.30px;top:105.68px;font-size:5.10px;color:#d6d6d6;transform:scaleX(0.9652);transform-origin:0 0;">Designer</div>
<svg class="a" style="left:779.00px;top:121.60px;" width="5.00" height="3.00" viewBox="0 0 5.00 3.00"><path d="M0.4 0.4 L2.5 2.4 L4.6 0.4" stroke="#d0d0d0" stroke-width="0.7" fill="none"/></svg>
<div class="t" style="left:8.70px;top:167.30px;font-size:7.20px;color:#d8d8d8;">2</div>
<svg class="a" style="left:8.60px;top:175.10px;" width="4.40" height="4.40" viewBox="0 0 4.40 4.40"><path d="M2.2 0 L2.8 1.5 L4.4 1.6 L3.2 2.6 L3.6 4.2 L2.2 3.3 L0.8 4.2 L1.2 2.6 L0 1.6 L1.6 1.5Z" fill="#d8d8d8"/></svg>
<div class="t" style="left:8.70px;top:233.00px;font-size:7.20px;color:#d8d8d8;">3</div>
<svg class="a" style="left:8.60px;top:240.80px;" width="4.40" height="4.40" viewBox="0 0 4.40 4.40"><path d="M2.2 0 L2.8 1.5 L4.4 1.6 L3.2 2.6 L3.6 4.2 L2.2 3.3 L0.8 4.2 L1.2 2.6 L0 1.6 L1.6 1.5Z" fill="#d8d8d8"/></svg>
<div class="t" style="left:8.70px;top:298.20px;font-size:7.20px;color:#d8d8d8;">4</div>
<svg class="a" style="left:8.60px;top:306.00px;" width="4.40" height="4.40" viewBox="0 0 4.40 4.40"><path d="M2.2 0 L2.8 1.5 L4.4 1.6 L3.2 2.6 L3.6 4.2 L2.2 3.3 L0.8 4.2 L1.2 2.6 L0 1.6 L1.6 1.5Z" fill="#d8d8d8"/></svg>
<div class="t" style="left:8.70px;top:363.50px;font-size:7.20px;color:#d8d8d8;">5</div>
<svg class="a" style="left:8.60px;top:371.30px;" width="4.40" height="4.40" viewBox="0 0 4.40 4.40"><path d="M2.2 0 L2.8 1.5 L4.4 1.6 L3.2 2.6 L3.6 4.2 L2.2 3.3 L0.8 4.2 L1.2 2.6 L0 1.6 L1.6 1.5Z" fill="#d8d8d8"/></svg>
<div class="t" style="left:8.70px;top:429.10px;font-size:7.20px;color:#d8d8d8;">6</div>
<svg class="a" style="left:8.60px;top:436.90px;" width="4.40" height="4.40" viewBox="0 0 4.40 4.40"><path d="M2.2 0 L2.8 1.5 L4.4 1.6 L3.2 2.6 L3.6 4.2 L2.2 3.3 L0.8 4.2 L1.2 2.6 L0 1.6 L1.6 1.5Z" fill="#d8d8d8"/></svg>
<svg class="a" style="left:121.20px;top:130.60px;" width="4.00" height="3.00" viewBox="0 0 4.00 3.00"><path d="M0.2 2.6 L2 0.4 L3.8 2.6Z" fill="#bdbdbd"/></svg>
<div class="a" style="left:121.30px;top:143.60px;width:3.60px;height:84.20px;background:#9c9c9c;border-radius:2px;"></div>
<svg class="a" style="left:121.20px;top:463.60px;" width="4.00" height="3.00" viewBox="0 0 4.00 3.00"><path d="M0.2 0.4 L2 2.6 L3.8 0.4Z" fill="#bdbdbd"/></svg>
<div class="a" style="left:19px;top:128px;width:92px;height:32px;overflow:hidden;border-radius:1px"><svg width="92" height="57" style="position:absolute;left:0;top:-24.5px" viewBox="0 0 92 57"><defs><linearGradient id="s1g" x1="0" y1="0" x2="1" y2="1"><stop offset="0" stop-color="#21403a"/><stop offset="0.55" stop-color="#284a40"/><stop offset="1" stop-color="#33604f"/></linearGradient></defs><rect width="92" height="57" fill="url(#s1g)"/><path d="M66 57 L92 26 L92 38 L76 57Z" fill="#3f7565" opacity="0.35"/><rect x="3" y="25.2" width="45" height="1.4" fill="#cfd8d4" opacity="0.55"/><rect x="3" y="28.8" width="47" height="2.4" fill="#d89a3a" opacity="0.75"/><rect x="6" y="29.5" width="10" height="1" fill="#2a3a30" opacity="0.5"/><rect x="25" y="29.5" width="2" height="1" fill="#2a3a30" opacity="0.5"/><rect x="52.5" y="29" width="2" height="2" fill="#d8d8d8"/><text x="3" y="37.8" font-size="4.6" font-family="Liberation Serif" font-weight="700" fill="#eeeeee">України</text><rect x="3" y="40.2" width="8" height="0.8" fill="#cfd8d4" opacity="0.5"/><rect x="3" y="43.2" width="36" height="0.8" fill="#cfd8d4" opacity="0.55"/><rect x="3" y="47.6" width="8" height="0.9" fill="#e0e0e0" opacity="0.8"/><rect x="3" y="49.6" width="15" height="0.7" fill="#a8b8b2" opacity="0.55"/><rect x="3" y="51.4" width="13" height="0.7" fill="#a8b8b2" opacity="0.55"/><rect x="79" y="44.6" width="10" height="0.7" fill="#cfd8d4" opacity="0.6"/><rect x="73" y="46.3" width="16" height="1" fill="#f0f0f0"/><rect x="83" y="48.6" width="6" height="0.7" fill="#cfd8d4" opacity="0.6"/><rect x="86" y="50.8" width="3" height="0.9" fill="#e8e8e8"/></svg></div>
<svg class="a" style="left:18.30px;top:169.00px;border-radius:1px;" width="93.00" height="56.60" viewBox="0 0 93.00 56.60"><rect width="93" height="56.6" fill="#f4f4f6"/><rect x="3" y="2.4" width="3" height="0.7" fill="#d6a33f"/><text x="3" y="8.6" font-size="4.6" font-family="Liberation Serif" font-weight="700" fill="#1d3b31" textLength="36" lengthAdjust="spacingAndGlyphs">Структура презентації</text><rect x="3" y="10.6" width="7" height="0.5" fill="#d6a33f"/><rect x="3.2" y="12.5" width="42.5" height="11.2" fill="#ffffff"/><rect x="3.2" y="12.5" width="0.6" height="11.2" fill="#9aa" opacity="0.6"/><rect x="5.6" y="14.5" width="3.2" height="3.2" rx="0.5" fill="#1d3b31"/><rect x="10.2" y="15.7" width="16" height="0.9" fill="#444"/><rect x="5.6" y="19.1" width="32" height="0.6" fill="#aaa"/><rect x="5.6" y="20.5" width="20" height="0.6" fill="#aaa"/><rect x="47.2" y="12.5" width="42.5" height="11.2" fill="#ffffff"/><rect x="47.2" y="12.5" width="0.6" height="11.2" fill="#9aa" opacity="0.6"/><rect x="49.6" y="14.5" width="3.2" height="3.2" rx="0.5" fill="#4e7f6e"/><rect x="54.2" y="15.7" width="16" height="0.9" fill="#444"/><rect x="49.6" y="19.1" width="32" height="0.6" fill="#aaa"/><rect x="49.6" y="20.5" width="20" height="0.6" fill="#aaa"/><rect x="3.2" y="25.5" width="42.5" height="11.2" fill="#ffffff"/><rect x="3.2" y="25.5" width="0.6" height="11.2" fill="#9aa" opacity="0.6"/><rect x="5.6" y="27.5" width="3.2" height="3.2" rx="0.5" fill="#d1a44b"/><rect x="10.2" y="28.7" width="16" height="0.9" fill="#444"/><rect x="5.6" y="32.1" width="32" height="0.6" fill="#aaa"/><rect x="5.6" y="33.5" width="20" height="0.6" fill="#aaa"/><rect x="47.2" y="25.5" width="42.5" height="11.2" fill="#ffffff"/><rect x="47.2" y="25.5" width="0.6" height="11.2" fill="#9aa" opacity="0.6"/><rect x="49.6" y="27.5" width="3.2" height="3.2" rx="0.5" fill="#1d3b31"/><rect x="54.2" y="28.7" width="16" height="0.9" fill="#444"/><rect x="49.6" y="32.1" width="32" height="0.6" fill="#aaa"/><rect x="49.6" y="33.5" width="20" height="0.6" fill="#aaa"/><rect x="3.2" y="38.5" width="42.5" height="11.2" fill="#ffffff"/><rect x="3.2" y="38.5" width="0.6" height="11.2" fill="#9aa" opacity="0.6"/><rect x="5.6" y="40.5" width="3.2" height="3.2" rx="0.5" fill="#4e7f6e"/><rect x="10.2" y="41.7" width="16" height="0.9" fill="#444"/><rect x="5.6" y="45.1" width="32" height="0.6" fill="#aaa"/><rect x="5.6" y="46.5" width="20" height="0.6" fill="#aaa"/><rect x="47.2" y="38.5" width="42.5" height="11.2" fill="#ffffff"/><rect x="47.2" y="38.5" width="0.6" height="11.2" fill="#9aa" opacity="0.6"/><rect x="49.6" y="40.5" width="3.2" height="3.2" rx="0.5" fill="#d1a44b"/><rect x="54.2" y="41.7" width="16" height="0.9" fill="#444"/><rect x="49.6" y="45.1" width="32" height="0.6" fill="#aaa"/><rect x="49.6" y="46.5" width="20" height="0.6" fill="#aaa"/></svg>
<div class="a" style="left:17.00px;top:233.00px;width:95.80px;height:59.70px;background:transparent;border:1.6px solid #c9a58e;border-radius:2.5px;"></div>
<div class="a" style="left:19px;top:235px;width:92px;height:56.6px;overflow:hidden"><div class="a" style="left:-19px;top:-235px;width:999px;height:562px;transform:translate(-14.996px,211.168px) scale(0.17524);transform-origin:0 0"><div class="a" style="left:194.00px;top:136.00px;width:525.00px;height:323.00px;background:#f4f4f6;border:1px solid #fbfbfc;"></div>
<div class="t" style="left:210.60px;top:155.30px;font-size:7.20px;color:#d9a136;font-weight:700;transform:scaleX(0.9616);transform-origin:0 0;">АКТУАЛЬНІСТЬ ТЕМИ</div>
<div class="t" style="left:210.40px;top:164.89px;font-size:19.60px;color:#1d3b31;font-weight:700;font-family:'Liberation Serif',serif;transform:scaleX(1.0732);transform-origin:0 0;">Чому «зелена» економіка критично важлива?</div>
<div class="a" style="left:210.40px;top:192.00px;width:39.30px;height:2.00px;background:#d6a33f;"></div>
<div class="a" style="left:211.00px;top:203.80px;width:157.80px;height:173.40px;background:#ffffff;border-radius:5px;box-shadow:0 0 2px rgba(0,0,0,0.03);"></div>
<div class="a" style="left:377.50px;top:203.80px;width:157.80px;height:173.40px;background:#ffffff;border-radius:5px;box-shadow:0 0 2px rgba(0,0,0,0.03);"></div>
<div class="a" style="left:544.00px;top:203.80px;width:157.80px;height:173.40px;background:#ffffff;border-radius:5px;box-shadow:0 0 2px rgba(0,0,0,0.03);"></div>
<div class="a" style="left:220.00px;top:213.60px;width:20.00px;height:20.00px;background:#1d3b31;border-radius:4px;"></div>
<div class="a" style="left:386.50px;top:213.60px;width:20.00px;height:20.00px;background:#4e7f6e;border-radius:4px;"></div>
<div class="a" style="left:553.00px;top:213.60px;width:20.00px;height:20.00px;background:#d1a44b;border-radius:4px;"></div>
<svg class="a" style="left:225.00px;top:218.60px;" width="10.00" height="10.00" viewBox="0 0 10.00 10.00"><circle cx="5" cy="5" r="4" fill="#fff"/><path d="M2.2 3.2 Q3.6 2 5.4 2.6 L4.6 4.2 L6.2 5 L5 7.8 L4.2 6 L2.8 5.6Z M6.6 2.4 L7.8 3.4 L7 4.2Z" fill="#1d3b31"/></svg>
<svg class="a" style="left:391.50px;top:218.60px;" width="10.00" height="10.00" viewBox="0 0 10.00 10.00"><path d="M2.3 0.4 L2.3 9.2" stroke="#fff" stroke-width="1.2"/><path d="M2.3 0.9 Q3.8 0.1 5.3 0.9 Q6.8 1.7 8.8 0.9 L8.8 6.3 Q6.8 7.1 5.3 6.3 Q3.8 5.5 2.3 6.3Z" fill="#fff"/></svg>
<svg class="a" style="left:558.00px;top:218.60px;" width="10.00" height="10.00" viewBox="0 0 10.00 10.00"><path d="M1.4 4.4 Q2.6 6.8 5 6.6 L3.4 8.8 Q7.2 8.6 8.2 5.6 Q8.6 3.8 9.6 3 L7.8 2.6 Q6.8 2.4 6.2 3.4 L5.4 0.6 Q4 1.6 4.2 3.8 Q2.6 2.8 1.4 4.4Z" fill="#fff"/></svg>
<div class="t" style="left:245.20px;top:218.22px;font-size:11.20px;color:#1c332c;font-weight:700;font-family:'Liberation Serif',serif;transform:scaleX(0.9234);transform-origin:0 0;">Глобальна криза</div>
<div class="t" style="left:411.80px;top:218.22px;font-size:11.20px;color:#1c332c;font-weight:700;font-family:'Liberation Serif',serif;transform:scaleX(0.9122);transform-origin:0 0;">Євроінтеграція</div>
<div class="t" style="left:578.40px;top:218.22px;font-size:11.20px;color:#1c332c;font-weight:700;font-family:'Liberation Serif',serif;transform:scaleX(0.9392);transform-origin:0 0;">Вікно можливостей</div>
<div class="t" style="left:265.80px;top:246.66px;font-size:24.50px;color:#d4a13c;font-weight:700;transform:scaleX(0.9626);transform-origin:0 0;">50%</div>
<div class="t" style="left:243.70px;top:279.63px;font-size:8.00px;color:#1e2624;transform:scaleX(0.9544);transform-origin:0 0;-webkit-text-stroke:0.38px #1e2624;">перевищення споживання</div>
<div class="t" style="left:220.70px;top:297.64px;font-size:6.80px;color:#66696b;">За оцінками WWF, поточний рівень</div>
<div class="t" style="left:220.70px;top:308.59px;font-size:6.80px;color:#66696b;transform:scaleX(1.0097);transform-origin:0 0;">споживання природних ресурсів людством</div>
<div class="t" style="left:220.70px;top:319.54px;font-size:6.80px;color:#66696b;">перевищує відновлювальні можливості</div>
<div class="t" style="left:220.70px;top:330.49px;font-size:6.80px;color:#66696b;">планети приблизно на <b style="color:#1e2624">50%</b>, що підсилює</div>
<div class="t" style="left:220.70px;top:341.44px;font-size:6.80px;color:#66696b;transform:scaleX(1.0083);transform-origin:0 0;">ризики екологічної та економічної</div>
<div class="t" style="left:220.70px;top:352.39px;font-size:6.80px;color:#66696b;transform:scaleX(1.0082);transform-origin:0 0;">нестійкості</div>
<div class="t" style="left:387.30px;top:248.24px;font-size:6.80px;color:#66696b;transform:scaleX(1.0083);transform-origin:0 0;">Євроінтеграційний вектор розвитку України</div>
<div class="t" style="left:387.30px;top:259.19px;font-size:6.80px;color:#66696b;">вимагає оперативного та системного</div>
<div class="t" style="left:387.30px;top:270.14px;font-size:6.80px;color:#66696b;transform:scaleX(0.9906);transform-origin:0 0;">вирішення проблем у сфері реалізації</div>
<div class="t" style="left:387.30px;top:281.09px;font-size:6.80px;color:#66696b;transform:scaleX(1.0066);transform-origin:0 0;">державної політики сталого розвитку з</div>
<div class="t" style="left:387.30px;top:292.04px;font-size:6.80px;color:#66696b;">використанням принципів «зеленої»</div>
<div class="t" style="left:387.30px;top:302.99px;font-size:6.80px;color:#66696b;transform:scaleX(1.0125);transform-origin:0 0;">економіки</div>
<div class="t" style="left:554.00px;top:253.84px;font-size:6.80px;color:#66696b;transform:scaleX(0.9840);transform-origin:0 0;">Повномасштабна війна створила унікальне</div>
<div class="t" style="left:554.00px;top:264.74px;font-size:6.80px;color:#66696b;transform:scaleX(1.0127);transform-origin:0 0;"><b style="color:#1e2624">«вікно можливостей»</b> для глибокої</div>
<div class="t" style="left:554.00px;top:275.64px;font-size:6.80px;color:#66696b;">структурної модернізації та переходу до</div>
<div class="t" style="left:554.00px;top:286.54px;font-size:6.80px;color:#66696b;transform:scaleX(1.0068);transform-origin:0 0;">високих стандартів екологічної стійкості</div>
<div class="a" style="left:387.30px;top:327.20px;width:138.10px;height:35.60px;background:#edefef;border-radius:5px;"></div>
<svg class="a" style="left:394.60px;top:335.80px;" width="6.40" height="6.40" viewBox="0 0 6.40 6.40"><circle cx="3.2" cy="3.2" r="3.2" fill="#4e7f6e"/><path d="M1.8 3.3 L2.9 4.3 L4.7 2.3" stroke="#fff" stroke-width="0.9" fill="none"/></svg>
<div class="t" style="left:404.20px;top:335.97px;font-size:7.00px;color:#1e2624;transform:scaleX(0.9828);transform-origin:0 0;-webkit-text-stroke:0.32px #1e2624;">Європейський зелений курс</div>
<svg class="a" style="left:394.60px;top:348.80px;" width="6.40" height="6.40" viewBox="0 0 6.40 6.40"><circle cx="3.2" cy="3.2" r="3.2" fill="#4e7f6e"/><path d="M1.8 3.3 L2.9 4.3 L4.7 2.3" stroke="#fff" stroke-width="0.9" fill="none"/></svg>
<div class="t" style="left:404.20px;top:348.77px;font-size:7.00px;color:#1e2624;transform:scaleX(0.9783);transform-origin:0 0;-webkit-text-stroke:0.32px #1e2624;">Кліматична нейтральність до 2050</div>
<div class="a" style="left:553.80px;top:321.80px;width:138.10px;height:36.00px;background:#fbf4ea;border-radius:5px;"></div>
<svg class="a" style="left:560.50px;top:330.80px;" width="7.50" height="6.00" viewBox="0 0 7.50 6.00"><path d="M0.5 3 L6.5 3 M4 0.6 L6.6 3 L4 5.4" stroke="#d6a33f" stroke-width="0.9" fill="none"/></svg>
<div class="t" style="left:570.70px;top:330.47px;font-size:7.00px;color:#1e2624;transform:scaleX(0.9834);transform-origin:0 0;-webkit-text-stroke:0.32px #1e2624;">Відмова від «коричневої» моделі</div>
<svg class="a" style="left:560.50px;top:343.80px;" width="7.50" height="6.00" viewBox="0 0 7.50 6.00"><path d="M0.5 3 L6.5 3 M4 0.6 L6.6 3 L4 5.4" stroke="#d6a33f" stroke-width="0.9" fill="none"/></svg>
<div class="t" style="left:570.70px;top:343.37px;font-size:7.00px;color:#1e2624;transform:scaleX(0.9792);transform-origin:0 0;-webkit-text-stroke:0.32px #1e2624;">Будівництво майбутнього</div>
<div class="a" style="left:210.50px;top:386.80px;width:491.50px;height:27.80px;background:#1e3d33;border-radius:5px;"></div>
<svg class="a" style="left:221.50px;top:394.50px;" width="10.00" height="13.50" viewBox="0 0 10.00 13.50"><circle cx="5" cy="5" r="4.2" fill="#e0ad45"/><rect x="3" y="9" width="4" height="1.6" fill="#e0ad45"/><rect x="3.4" y="11.2" width="3.2" height="1.4" rx="0.6" fill="#e0ad45"/><path d="M3.2 4.2 Q3.6 2.6 5 2.4" stroke="#fff6dc" stroke-width="0.8" fill="none"/></svg>
<div class="t" style="left:240.80px;top:397.87px;font-size:7.60px;color:#ffffff;-webkit-text-stroke:0.3px #ffffff;">Ключове завдання: формування ефективних механізмів реалізації політики сталого розвитку на засадах «зеленої» економіки</div></div></div>
<svg class="a" style="left:18.70px;top:299.90px;border-radius:1px;" width="92.40" height="56.40" viewBox="0 0 92.40 56.40"><rect width="92.4" height="56.4" fill="#f4f4f6"/><rect x="3.3" y="2.6" width="9" height="0.8" fill="#d6a33f"/><text x="3.3" y="8.6" font-size="4.2" font-family="Liberation Serif" font-weight="700" fill="#1d3b31" textLength="29" lengthAdjust="spacingAndGlyphs">Мета дослідження</text><rect x="3.3" y="10.2" width="5" height="0.5" fill="#d6a33f"/><rect x="3.3" y="12" width="48" height="38.5" rx="1.2" fill="#2c5649"/><rect x="5.5" y="18.8" width="3.6" height="3.6" fill="#e0a535"/><rect x="10.5" y="19.8" width="15" height="1.3" fill="#e8e8e8"/><rect x="5.5" y="24.6" width="42" height="0.8" fill="#cfe0d8" opacity="0.75"/><rect x="5.5" y="27.2" width="42" height="0.8" fill="#cfe0d8" opacity="0.75"/><rect x="5.5" y="29.8" width="42" height="0.8" fill="#cfe0d8" opacity="0.75"/><rect x="5.5" y="32.4" width="42" height="0.8" fill="#cfe0d8" opacity="0.75"/><rect x="5.5" y="36.6" width="9" height="1" fill="#f0f0f0"/><rect x="26" y="36.6" width="10" height="1" fill="#f0f0f0"/><rect x="5.5" y="39.4" width="16" height="0.7" fill="#cfe0d8" opacity="0.7"/><rect x="26" y="39.4" width="19" height="0.7" fill="#cfe0d8" opacity="0.7"/><rect x="5.5" y="41.4" width="16" height="0.7" fill="#cfe0d8" opacity="0.7"/><rect x="26" y="41.4" width="19" height="0.7" fill="#cfe0d8" opacity="0.7"/><rect x="5.5" y="43.4" width="16" height="0.7" fill="#cfe0d8" opacity="0.7"/><rect x="26" y="43.4" width="19" height="0.7" fill="#cfe0d8" opacity="0.7"/><rect x="54.5" y="15.4" width="20" height="1" fill="#444"/><rect x="54.5" y="18.8" width="2" height="2" fill="#1d3b31"/><rect x="58" y="19.0" width="28" height="0.6" fill="#999"/><rect x="58" y="20.4" width="16" height="0.6" fill="#999"/><rect x="54.5" y="23.8" width="2" height="2" fill="#4e7f6e"/><rect x="58" y="24.0" width="28" height="0.6" fill="#999"/><rect x="58" y="25.4" width="16" height="0.6" fill="#999"/><rect x="54.5" y="28.8" width="2" height="2" fill="#d1a44b"/><rect x="58" y="29.0" width="28" height="0.6" fill="#999"/><rect x="58" y="30.4" width="16" height="0.6" fill="#999"/><rect x="54.5" y="33.8" width="2" height="2" fill="#1d3b31"/><rect x="58" y="34.0" width="28" height="0.6" fill="#999"/><rect x="58" y="35.4" width="16" height="0.6" fill="#999"/><rect x="54.5" y="38.8" width="2" height="2" fill="#888"/><rect x="58" y="39.0" width="28" height="0.6" fill="#999"/><rect x="58" y="40.4" width="16" height="0.6" fill="#999"/><rect x="54.5" y="44.2" width="16" height="8" fill="#fbf4ea"/><rect x="72" y="44.2" width="16" height="8" fill="#e6e8e8"/><rect x="60" y="46" width="4" height="1.2" fill="#d6a33f"/><rect x="78" y="46" width="4" height="1.2" fill="#333"/></svg>
<svg class="a" style="left:18.50px;top:364.90px;border-radius:1px;" width="92.80" height="57.70" viewBox="0 0 92.80 57.70"><defs><radialGradient id="s5g" cx="0.75" cy="0.35" r="0.6"><stop offset="0" stop-color="#2a4a3f"/><stop offset="1" stop-color="#1f372f"/></radialGradient></defs><rect width="92.8" height="57.6" fill="url(#s5g)"/><rect x="3.9" y="7" width="4.2" height="4.2" fill="#e0a535"/><rect x="10" y="8.6" width="8" height="0.9" fill="#9fb5ac"/><text x="3.9" y="20.6" font-size="5.4" font-family="Liberation Serif" font-weight="700" fill="#f2f2f2">Теоретико-методичні</text><text x="3.9" y="27.0" font-size="5.4" font-family="Liberation Serif" font-weight="700" fill="#f2f2f2">засади «зеленої»</text><text x="3.9" y="33.4" font-size="5.4" font-family="Liberation Serif" font-weight="700" fill="#f2f2f2">економіки</text><rect x="3.9" y="36.8" width="50" height="0.8" fill="#b8c8c0" opacity="0.7"/><rect x="3.9" y="39.2" width="21" height="0.8" fill="#b8c8c0" opacity="0.7"/><rect x="3.9" y="44.4" width="12" height="0.9" fill="#b8c8c0" opacity="0.7"/><rect x="21" y="44.4" width="7" height="0.9" fill="#b8c8c0" opacity="0.7"/><rect x="32" y="44.4" width="8" height="0.9" fill="#b8c8c0" opacity="0.7"/></svg>
<svg class="a" style="left:18.90px;top:430.80px;" width="92.00" height="38.20" viewBox="0 0 92.00 38.20"><rect width="92" height="38.2" fill="#f4f4f6"/><rect x="3.5" y="2.4" width="18" height="1" fill="#d6a33f"/><rect x="3.5" y="5.6" width="48" height="1.6" fill="#2a3a34"/><rect x="3.5" y="9.6" width="43" height="29" fill="#ffffff"/><circle cx="7.4" cy="14.2" r="1.9" fill="#1d3b31"/><rect x="11" y="13.6" width="16" height="1" fill="#444"/><rect x="5" y="18.6" width="38" height="13" fill="#eef0f0"/><rect x="6.5" y="21" width="33" height="0.7" fill="#999"/><rect x="6.5" y="23" width="26" height="0.7" fill="#999"/><rect x="6.5" y="25.6" width="35" height="1" fill="#333"/><rect x="6.5" y="27.6" width="30" height="1" fill="#333"/><rect x="6.5" y="29.6" width="16" height="0.7" fill="#aaa"/><rect x="49" y="9.6" width="40" height="29" fill="#ffffff"/><rect x="50" y="11" width="2" height="1.6" fill="#d6a33f"/><rect x="53" y="11.4" width="16" height="0.7" fill="#666"/><rect x="50" y="14.6" width="2.6" height="2.6" fill="#1d3b31"/><rect x="54" y="14.8" width="12" height="0.9" fill="#333"/><rect x="60" y="16.6" width="22" height="0.6" fill="#aaa"/><rect x="50" y="19.8" width="2.6" height="2.6" fill="#4e7f6e"/><rect x="54" y="20" width="12" height="0.9" fill="#333"/><rect x="54" y="21.8" width="28" height="0.6" fill="#aaa"/><rect x="51.5" y="27" width="12" height="0.8" fill="#555"/><rect x="51.5" y="30.6" width="14" height="0.6" fill="#888"/><rect x="69" y="30.6" width="12" height="0.6" fill="#888"/><rect x="51.5" y="33" width="14" height="0.6" fill="#888"/><rect x="69" y="33.4" width="6" height="0.6" fill="#888"/></svg>
<div class="t" style="left:8.90px;top:471.77px;font-size:5.00px;color:#d8d8d8;transform:scaleX(0.9461);transform-origin:0 0;">Slide 3 of 20</div>
<div class="t" style="left:47.70px;top:471.77px;font-size:5.00px;color:#d8d8d8;transform:scaleX(0.9197);transform-origin:0 0;">Russian (Ukraine)</div>
<svg class="a" style="left:90.50px;top:470.50px;" width="6.50" height="6.50" viewBox="0 0 6.50 6.50"><path d="M1 1 L5.5 1 M3.2 1 L3.2 5.6 M1.2 5.6 L5.4 5.6" stroke="#cfcfcf" stroke-width="0.6" fill="none"/></svg>
<div class="t" style="left:98.80px;top:471.77px;font-size:5.00px;color:#d8d8d8;transform:scaleX(0.9534);transform-origin:0 0;">Accessibility: Good to go</div>
<svg class="a" style="left:612.00px;top:470.50px;" width="7.00" height="6.50" viewBox="0 0 7.00 6.50"><path d="M0.5 6 L0.5 2 Q3.5 0 6.5 2 L6.5 6Z" stroke="#cfcfcf" stroke-width="0.6" fill="none"/></svg>
<div class="t" style="left:621.00px;top:471.77px;font-size:5.00px;color:#d8d8d8;transform:scaleX(0.9187);transform-origin:0 0;">Notes</div>
<div class="a" style="left:643.00px;top:467.80px;width:13.00px;height:12.00px;background:#3a3a3d;"></div>
<svg class="a" style="left:645.40px;top:471.00px;" width="6.40" height="5.50" viewBox="0 0 6.40 5.50"><rect x="0.4" y="0.4" width="5.6" height="4.7" stroke="#cfcfcf" stroke-width="0.6" fill="none"/><path d="M0.4 2.6 L6 2.6 M3.2 0.4 L3.2 5.1" stroke="#cfcfcf" stroke-width="0.4"/></svg>
<svg class="a" style="left:661.80px;top:471.00px;" width="6.40" height="5.50" viewBox="0 0 6.40 5.50"><rect x="0.4" y="0.4" width="5.6" height="4.7" stroke="#cfcfcf" stroke-width="0.6" fill="none"/><path d="M0.4 2.6 L6 2.6 M3.2 0.4 L3.2 5.1" stroke="#cfcfcf" stroke-width="0.4"/></svg>
<svg class="a" style="left:677.80px;top:471.00px;" width="6.40" height="5.50" viewBox="0 0 6.40 5.50"><rect x="0.4" y="0.4" width="5.6" height="4.7" stroke="#cfcfcf" stroke-width="0.6" fill="none"/><path d="M0.4 2.6 L6 2.6 M3.2 0.4 L3.2 5.1" stroke="#cfcfcf" stroke-width="0.4"/></svg>
<svg class="a" style="left:695.00px;top:470.50px;" width="6.40" height="6.50" viewBox="0 0 6.40 6.50"><rect x="0.5" y="0.5" width="5.4" height="3.2" stroke="#cfcfcf" stroke-width="0.6" fill="none"/><path d="M3.2 3.7 L3.2 6 M1.4 6 L5 6" stroke="#cfcfcf" stroke-width="0.6"/></svg>
<div class="a" style="left:709.00px;top:474.20px;width:3.00px;height:0.70px;background:#9a9a9a;"></div>
<div class="a" style="left:715.00px;top:474.20px;width:46.00px;height:0.70px;background:#9a9a9a;"></div>
<div class="a" style="left:734.40px;top:471.40px;width:1.80px;height:6.00px;background:#e0e0e0;border-radius:1px;"></div>
<div class="t" style="left:766.00px;top:471.77px;font-size:5.00px;color:#cfcfcf;transform:scaleX(0.7429);transform-origin:0 0;">101%</div>
<svg class="a" style="left:782.00px;top:470.50px;" width="6.50" height="6.50" viewBox="0 0 6.50 6.50"><path d="M3.25 0.3 L6.2 3.25 L3.25 6.2 L0.3 3.25Z" stroke="#cfcfcf" stroke-width="0.6" fill="none"/></svg>
<div class="a" style="left:194.00px;top:136.00px;width:525.00px;height:323.00px;background:#f4f4f6;border:1px solid #fbfbfc;"></div>
<div class="t" style="left:210.60px;top:155.30px;font-size:7.20px;color:#d9a136;font-weight:700;transform:scaleX(0.9616);transform-origin:0 0;">АКТУАЛЬНІСТЬ ТЕМИ</div>
<div class="t" style="left:210.40px;top:164.89px;font-size:19.60px;color:#1d3b31;font-weight:700;font-family:'Liberation Serif',serif;transform:scaleX(1.0732);transform-origin:0 0;">Чому «зелена» економіка критично важлива?</div>
<div class="a" style="left:210.40px;top:192.00px;width:39.30px;height:2.00px;background:#d6a33f;"></div>
<div class="a" style="left:211.00px;top:203.80px;width:157.80px;height:173.40px;background:#ffffff;border-radius:5px;box-shadow:0 0 2px rgba(0,0,0,0.03);"></div>
<div class="a" style="left:377.50px;top:203.80px;width:157.80px;height:173.40px;background:#ffffff;border-radius:5px;box-shadow:0 0 2px rgba(0,0,0,0.03);"></div>
<div class="a" style="left:544.00px;top:203.80px;width:157.80px;height:173.40px;background:#ffffff;border-radius:5px;box-shadow:0 0 2px rgba(0,0,0,0.03);"></div>
<div class="a" style="left:220.00px;top:213.60px;width:20.00px;height:20.00px;background:#1d3b31;border-radius:4px;"></div>
<div class="a" style="left:386.50px;top:213.60px;width:20.00px;height:20.00px;background:#4e7f6e;border-radius:4px;"></div>
<div class="a" style="left:553.00px;top:213.60px;width:20.00px;height:20.00px;background:#d1a44b;border-radius:4px;"></div>
<svg class="a" style="left:225.00px;top:218.60px;" width="10.00" height="10.00" viewBox="0 0 10.00 10.00"><circle cx="5" cy="5" r="4" fill="#fff"/><path d="M2.2 3.2 Q3.6 2 5.4 2.6 L4.6 4.2 L6.2 5 L5 7.8 L4.2 6 L2.8 5.6Z M6.6 2.4 L7.8 3.4 L7 4.2Z" fill="#1d3b31"/></svg>
<svg class="a" style="left:391.50px;top:218.60px;" width="10.00" height="10.00" viewBox="0 0 10.00 10.00"><path d="M2.3 0.4 L2.3 9.2" stroke="#fff" stroke-width="1.2"/><path d="M2.3 0.9 Q3.8 0.1 5.3 0.9 Q6.8 1.7 8.8 0.9 L8.8 6.3 Q6.8 7.1 5.3 6.3 Q3.8 5.5 2.3 6.3Z" fill="#fff"/></svg>
<svg class="a" style="left:558.00px;top:218.60px;" width="10.00" height="10.00" viewBox="0 0 10.00 10.00"><path d="M1.4 4.4 Q2.6 6.8 5 6.6 L3.4 8.8 Q7.2 8.6 8.2 5.6 Q8.6 3.8 9.6 3 L7.8 2.6 Q6.8 2.4 6.2 3.4 L5.4 0.6 Q4 1.6 4.2 3.8 Q2.6 2.8 1.4 4.4Z" fill="#fff"/></svg>
<div class="t" style="left:245.20px;top:218.22px;font-size:11.20px;color:#1c332c;font-weight:700;font-family:'Liberation Serif',serif;transform:scaleX(0.9234);transform-origin:0 0;">Глобальна криза</div>
<div class="t" style="left:411.80px;top:218.22px;font-size:11.20px;color:#1c332c;font-weight:700;font-family:'Liberation Serif',serif;transform:scaleX(0.9122);transform-origin:0 0;">Євроінтеграція</div>
<div class="t" style="left:578.40px;top:218.22px;font-size:11.20px;color:#1c332c;font-weight:700;font-family:'Liberation Serif',serif;transform:scaleX(0.9392);transform-origin:0 0;">Вікно можливостей</div>
<div class="t" style="left:265.80px;top:246.66px;font-size:24.50px;color:#d4a13c;font-weight:700;transform:scaleX(0.9626);transform-origin:0 0;">50%</div>
<div class="t" style="left:243.70px;top:279.63px;font-size:8.00px;color:#1e2624;transform:scaleX(0.9544);transform-origin:0 0;-webkit-text-stroke:0.38px #1e2624;">перевищення споживання</div>
<div class="t" style="left:220.70px;top:297.64px;font-size:6.80px;color:#66696b;">За оцінками WWF, поточний рівень</div>
<div class="t" style="left:220.70px;top:308.59px;font-size:6.80px;color:#66696b;transform:scaleX(1.0097);transform-origin:0 0;">споживання природних ресурсів людством</div>
<div class="t" style="left:220.70px;top:319.54px;font-size:6.80px;color:#66696b;">перевищує відновлювальні можливості</div>
<div class="t" style="left:220.70px;top:330.49px;font-size:6.80px;color:#66696b;">планети приблизно на <b style="color:#1e2624">50%</b>, що підсилює</div>
<div class="t" style="left:220.70px;top:341.44px;font-size:6.80px;color:#66696b;transform:scaleX(1.0083);transform-origin:0 0;">ризики екологічної та економічної</div>
<div class="t" style="left:220.70px;top:352.39px;font-size:6.80px;color:#66696b;transform:scaleX(1.0082);transform-origin:0 0;">нестійкості</div>
<div class="t" style="left:387.30px;top:248.24px;font-size:6.80px;color:#66696b;transform:scaleX(1.0083);transform-origin:0 0;">Євроінтеграційний вектор розвитку України</div>
<div class="t" style="left:387.30px;top:259.19px;font-size:6.80px;color:#66696b;">вимагає оперативного та системного</div>
<div class="t" style="left:387.30px;top:270.14px;font-size:6.80px;color:#66696b;transform:scaleX(0.9906);transform-origin:0 0;">вирішення проблем у сфері реалізації</div>
<div class="t" style="left:387.30px;top:281.09px;font-size:6.80px;color:#66696b;transform:scaleX(1.0066);transform-origin:0 0;">державної політики сталого розвитку з</div>
<div class="t" style="left:387.30px;top:292.04px;font-size:6.80px;color:#66696b;">використанням принципів «зеленої»</div>
<div class="t" style="left:387.30px;top:302.99px;font-size:6.80px;color:#66696b;transform:scaleX(1.0125);transform-origin:0 0;">економіки</div>
<div class="t" style="left:554.00px;top:253.84px;font-size:6.80px;color:#66696b;transform:scaleX(0.9840);transform-origin:0 0;">Повномасштабна війна створила унікальне</div>
<div class="t" style="left:554.00px;top:264.74px;font-size:6.80px;color:#66696b;transform:scaleX(1.0127);transform-origin:0 0;"><b style="color:#1e2624">«вікно можливостей»</b> для глибокої</div>
<div class="t" style="left:554.00px;top:275.64px;font-size:6.80px;color:#66696b;">структурної модернізації та переходу до</div>
<div class="t" style="left:554.00px;top:286.54px;font-size:6.80px;color:#66696b;transform:scaleX(1.0068);transform-origin:0 0;">високих стандартів екологічної стійкості</div>
<div class="a" style="left:387.30px;top:327.20px;width:138.10px;height:35.60px;background:#edefef;border-radius:5px;"></div>
<svg class="a" style="left:394.60px;top:335.80px;" width="6.40" height="6.40" viewBox="0 0 6.40 6.40"><circle cx="3.2" cy="3.2" r="3.2" fill="#4e7f6e"/><path d="M1.8 3.3 L2.9 4.3 L4.7 2.3" stroke="#fff" stroke-width="0.9" fill="none"/></svg>
<div class="t" style="left:404.20px;top:335.97px;font-size:7.00px;color:#1e2624;transform:scaleX(0.9828);transform-origin:0 0;-webkit-text-stroke:0.32px #1e2624;">Європейський зелений курс</div>
<svg class="a" style="left:394.60px;top:348.80px;" width="6.40" height="6.40" viewBox="0 0 6.40 6.40"><circle cx="3.2" cy="3.2" r="3.2" fill="#4e7f6e"/><path d="M1.8 3.3 L2.9 4.3 L4.7 2.3" stroke="#fff" stroke-width="0.9" fill="none"/></svg>
<div class="t" style="left:404.20px;top:348.77px;font-size:7.00px;color:#1e2624;transform:scaleX(0.9783);transform-origin:0 0;-webkit-text-stroke:0.32px #1e2624;">Кліматична нейтральність до 2050</div>
<div class="a" style="left:553.80px;top:321.80px;width:138.10px;height:36.00px;background:#fbf4ea;border-radius:5px;"></div>
<svg class="a" style="left:560.50px;top:330.80px;" width="7.50" height="6.00" viewBox="0 0 7.50 6.00"><path d="M0.5 3 L6.5 3 M4 0.6 L6.6 3 L4 5.4" stroke="#d6a33f" stroke-width="0.9" fill="none"/></svg>
<div class="t" style="left:570.70px;top:330.47px;font-size:7.00px;color:#1e2624;transform:scaleX(0.9834);transform-origin:0 0;-webkit-text-stroke:0.32px #1e2624;">Відмова від «коричневої» моделі</div>
<svg class="a" style="left:560.50px;top:343.80px;" width="7.50" height="6.00" viewBox="0 0 7.50 6.00"><path d="M0.5 3 L6.5 3 M4 0.6 L6.6 3 L4 5.4" stroke="#d6a33f" stroke-width="0.9" fill="none"/></svg>
<div class="t" style="left:570.70px;top:343.37px;font-size:7.00px;color:#1e2624;transform:scaleX(0.9792);transform-origin:0 0;-webkit-text-stroke:0.32px #1e2624;">Будівництво майбутнього</div>
<div class="a" style="left:210.50px;top:386.80px;width:491.50px;height:27.80px;background:#1e3d33;border-radius:5px;"></div>
<svg class="a" style="left:221.50px;top:394.50px;" width="10.00" height="13.50" viewBox="0 0 10.00 13.50"><circle cx="5" cy="5" r="4.2" fill="#e0ad45"/><rect x="3" y="9" width="4" height="1.6" fill="#e0ad45"/><rect x="3.4" y="11.2" width="3.2" height="1.4" rx="0.6" fill="#e0ad45"/><path d="M3.2 4.2 Q3.6 2.6 5 2.4" stroke="#fff6dc" stroke-width="0.8" fill="none"/></svg>
<div class="t" style="left:240.80px;top:397.87px;font-size:7.60px;color:#ffffff;-webkit-text-stroke:0.3px #ffffff;">Ключове завдання: формування ефективних механізмів реалізації політики сталого розвитку на засадах «зеленої» економіки</div>
<div class="t" style="left:850.20px;top:86.89px;font-size:11.00px;color:#f2f2f2;font-weight:700;transform:scaleX(1.0111);transform-origin:0 0;">Мирослава  Тел...</div>
<div class="a" style="left:848.40px;top:107.00px;width:90.10px;height:11.20px;background:rgba(34,34,38,0.9);border-radius:3px;"></div>
<svg class="a" style="left:850.60px;top:108.60px;" width="7.50" height="8.00" viewBox="0 0 7.50 8.00"><g transform="scale(0.930)"><path d="M3.2 0.8 Q4.6 0.4 5 1.8 L4.8 4.2 L6 5.6 L5.2 8.2 L4.4 8.2 L4.6 6.2 L3.6 5.2 L2.8 8.2 L1.8 8.2 L2.6 5 L2.2 2.8Z" fill="#e3463a"/><path d="M0.6 8 L7 0.6" stroke="#e3463a" stroke-width="0.9"/></g></svg>
<div class="t" style="left:862.80px;top:109.43px;font-size:8.00px;color:#e8e8e8;">Мирослава Теліщук</div>
<svg class="a" style="left:846.00px;top:120.60px;overflow:hidden;" width="105.00" height="58.40" viewBox="0 0 105.00 58.40"><defs><filter id="bl1" x="-20%" y="-20%" width="140%" height="140%"><feGaussianBlur stdDeviation="0.9"/></filter><filter id="bl1b" x="-20%" y="-20%" width="140%" height="140%"><feGaussianBlur stdDeviation="2"/></filter><radialGradient id="face1" cx="0.45" cy="0.4" r="0.6"><stop offset="0" stop-color="#e6e4e6"/><stop offset="0.5" stop-color="#cac6ca"/><stop offset="0.8" stop-color="#9e9a9e"/><stop offset="1" stop-color="#666266"/></radialGradient></defs><rect width="105" height="58.4" fill="#101318"/><g filter="url(#bl1)"><rect x="0" y="0" width="6" height="2.4" fill="#9aa6b0"/><rect x="10" y="0" width="12" height="50" fill="#5a3424"/><rect x="11" y="1" width="8" height="13" fill="#b0603e"/><rect x="12" y="16" width="7" height="8" fill="#8a4a30"/><rect x="11" y="26" width="8" height="8" fill="#4a78a0"/><rect x="85" y="0" width="20" height="58.4" fill="#c4a696"/><rect x="98" y="0" width="7" height="58.4" fill="#c8e0ea"/><rect x="87" y="10" width="9" height="26" fill="#c8804e"/><rect x="86" y="40" width="12" height="18" fill="#7a8aa8"/><path d="M30 0 L84 0 L86 30 L62 30 Z" fill="#151a2a"/><path d="M66 4 Q78 6 82 22 Q84 36 80 40 L72 34 Z" fill="#1c2544"/><path d="M60 26 Q78 30 88 42 L100 58.4 L56 58.4Z" fill="#1e2c58"/><path d="M70 38 Q86 42 96 52 L98 58.4 L66 58.4Z" fill="#2f4a96"/><path d="M34 50 Q44 46 56 48 L60 58.4 L30 58.4Z" fill="#1a1c28"/></g><g filter="url(#bl1)"><path d="M54 1 Q75 1 76 22 Q76 38 67 44 Q59 48 53 47.5 Q40 46.5 35 37 Q31 27 33.5 14 Q37 1.5 54 1Z" fill="url(#face1)"/><ellipse cx="40" cy="31" rx="5" ry="8" fill="#8e8a8e" opacity="0.45"/></g><g filter="url(#bl1)" opacity="0.9"><path d="M38 17.5 Q43 15.5 48 18" stroke="#3e3a3e" stroke-width="1.8" fill="none"/><path d="M58 18 Q64 15.5 69 18" stroke="#3e3a3e" stroke-width="1.8" fill="none"/><ellipse cx="43.5" cy="22.4" rx="3.4" ry="1.5" fill="#2e3040"/><ellipse cx="63.5" cy="22.4" rx="3.4" ry="1.5" fill="#2e3040"/><path d="M51 24 L50 31 Q52 33 56 32" stroke="#8a8488" stroke-width="1.1" fill="none"/><path d="M45 40.5 Q53 38.5 62 40.5" stroke="#4a3e42" stroke-width="1.6" fill="none"/></g></svg>
<div class="a" style="left:848.80px;top:166.00px;width:74.20px;height:12.00px;background:rgba(34,34,38,0.9);border-radius:3px;"></div>
<svg class="a" style="left:851.00px;top:167.60px;" width="7.50" height="8.80" viewBox="0 0 7.50 8.80"><g transform="scale(1.023)"><path d="M3.2 0.8 Q4.6 0.4 5 1.8 L4.8 4.2 L6 5.6 L5.2 8.2 L4.4 8.2 L4.6 6.2 L3.6 5.2 L2.8 8.2 L1.8 8.2 L2.6 5 L2.2 2.8Z" fill="#e3463a"/><path d="M0.6 8 L7 0.6" stroke="#e3463a" stroke-width="0.9"/></g></svg>
<div class="t" style="left:862.80px;top:168.83px;font-size:8.00px;color:#e8e8e8;">Марина Скорик</div>
<svg class="a" style="left:846.00px;top:179.00px;overflow:hidden;" width="105.00" height="59.60" viewBox="0 0 105.00 59.60"><defs><filter id="bl2" x="-20%" y="-20%" width="140%" height="140%"><feGaussianBlur stdDeviation="1"/></filter><linearGradient id="wall" x1="0" y1="0" x2="1" y2="0"><stop offset="0" stop-color="#969696"/><stop offset="0.35" stop-color="#acacac"/><stop offset="0.7" stop-color="#c4c4c6"/><stop offset="0.86" stop-color="#dcdde0"/><stop offset="0.95" stop-color="#f6f7f9"/><stop offset="1" stop-color="#eef0f2"/></linearGradient><radialGradient id="skin2" cx="0.5" cy="0.45" r="0.6"><stop offset="0" stop-color="#c2b2a6"/><stop offset="0.7" stop-color="#a8988e"/><stop offset="1" stop-color="#7e746e"/></radialGradient></defs><rect width="105" height="59.6" fill="url(#wall)"/><g filter="url(#bl2)"><path d="M40 59.6 Q46 50 56 49 Q70 48 82 56 L86 59.6Z" fill="#6a7a70"/><path d="M60 52 L80 59.6 L70 59.6Z" fill="#d8dcd8"/><rect x="47" y="42" width="16" height="10" fill="#9a8c84"/><path d="M55 12 Q71 12 71 30 Q70 44 62 48 Q55 51 49 48 Q40 44 39 30 Q39 12 55 12Z" fill="url(#skin2)"/><path d="M38.5 30 Q36 8 55 6 Q74 6 72 28 L70 30 Q69 17 62 16 Q52 14 46 17 Q41 20 41 30Z" fill="#262220"/><path d="M44 27.5 Q48 26 52 28 M58 28 Q62 26 66 27.5" stroke="#3c3430" stroke-width="1.3" fill="none"/><path d="M50 42 Q55 40.5 60 42" stroke="#3c3430" stroke-width="1.4" fill="none"/></g></svg>
<div class="a" style="left:846.00px;top:179.00px;width:105.00px;height:59.60px;background:transparent;border:2px solid #33d98a;"></div>
<div class="a" style="left:848.80px;top:226.00px;width:50.20px;height:9.80px;background:rgba(40,40,44,0.85);border-radius:2px;"></div>
<div class="t" style="left:851.00px;top:227.23px;font-size:8.00px;color:#f0f0f0;">Авінаш Гоял</div>
<div class="t" style="left:850.85px;top:262.29px;font-size:11.00px;color:#f2f2f2;font-weight:700;transform:scaleX(1.0370);transform-origin:0 0;">Жовноватий  А...</div>
<div class="a" style="left:848.80px;top:283.30px;width:94.00px;height:11.30px;background:rgba(34,34,38,0.9);border-radius:3px;"></div>
<svg class="a" style="left:851.00px;top:284.90px;" width="7.50" height="8.10" viewBox="0 0 7.50 8.10"><g transform="scale(0.942)"><path d="M3.2 0.8 Q4.6 0.4 5 1.8 L4.8 4.2 L6 5.6 L5.2 8.2 L4.4 8.2 L4.6 6.2 L3.6 5.2 L2.8 8.2 L1.8 8.2 L2.6 5 L2.2 2.8Z" fill="#e3463a"/><path d="M0.6 8 L7 0.6" stroke="#e3463a" stroke-width="0.9"/></g></svg>
<div class="t" style="left:862.60px;top:285.78px;font-size:8.00px;color:#e8e8e8;transform:scaleX(1.0101);transform-origin:0 0;">Жовноватий Арсеній</div>
<div class="a" style="left:875.60px;top:302.90px;width:46.20px;height:45.00px;background:#5b3ac2;border-radius:4px;"></div>
<div class="t" style="left:890.15px;top:314.90px;font-size:23.50px;color:#ffffff;">П</div>
<div class="a" style="left:848.80px;top:343.00px;width:71.10px;height:10.80px;background:rgba(34,34,38,0.9);border-radius:3px;"></div>
<svg class="a" style="left:851.00px;top:344.60px;" width="7.50" height="7.60" viewBox="0 0 7.50 7.60"><g transform="scale(0.884)"><path d="M3.2 0.8 Q4.6 0.4 5 1.8 L4.8 4.2 L6 5.6 L5.2 8.2 L4.4 8.2 L4.6 6.2 L3.6 5.2 L2.8 8.2 L1.8 8.2 L2.6 5 L2.2 2.8Z" fill="#e3463a"/><path d="M0.6 8 L7 0.6" stroke="#e3463a" stroke-width="0.9"/></g></svg>
<div class="t" style="left:862.60px;top:345.23px;font-size:8.00px;color:#e8e8e8;transform:scaleX(0.9811);transform-origin:0 0;">Поліна Юр`єва</div>
<div class="t" style="left:858.55px;top:379.79px;font-size:11.00px;color:#f2f2f2;font-weight:700;transform:scaleX(1.0362);transform-origin:0 0;">Юрій Кравцов</div>
<div class="a" style="left:848.80px;top:400.20px;width:69.50px;height:11.80px;background:rgba(34,34,38,0.9);border-radius:3px;"></div>
<svg class="a" style="left:851.00px;top:401.80px;" width="7.50" height="8.60" viewBox="0 0 7.50 8.60"><g transform="scale(1.000)"><path d="M3.2 0.8 Q4.6 0.4 5 1.8 L4.8 4.2 L6 5.6 L5.2 8.2 L4.4 8.2 L4.6 6.2 L3.6 5.2 L2.8 8.2 L1.8 8.2 L2.6 5 L2.2 2.8Z" fill="#e3463a"/><path d="M0.6 8 L7 0.6" stroke="#e3463a" stroke-width="0.9"/></g></svg>
<div class="t" style="left:862.60px;top:402.93px;font-size:8.00px;color:#e8e8e8;">Юрій Кравцов</div>
<div class="t" style="left:851.40px;top:438.09px;font-size:11.00px;color:#f2f2f2;font-weight:700;transform:scaleX(0.9857);transform-origin:0 0;">Denis Korniietskiy</div>
<div class="a" style="left:848.80px;top:458.60px;width:80.20px;height:12.10px;background:rgba(34,34,38,0.9);border-radius:3px;"></div>
<svg class="a" style="left:851.00px;top:460.20px;" width="7.50" height="8.90" viewBox="0 0 7.50 8.90"><g transform="scale(1.035)"><path d="M3.2 0.8 Q4.6 0.4 5 1.8 L4.8 4.2 L6 5.6 L5.2 8.2 L4.4 8.2 L4.6 6.2 L3.6 5.2 L2.8 8.2 L1.8 8.2 L2.6 5 L2.2 2.8Z" fill="#e3463a"/><path d="M0.6 8 L7 0.6" stroke="#e3463a" stroke-width="0.9"/></g></svg>
<div class="t" style="left:862.60px;top:461.48px;font-size:8.00px;color:#e8e8e8;transform:scaleX(1.0066);transform-origin:0 0;">Denis Korniietskiy</div>
<div class="t" style="left:739.60px;top:470.62px;font-size:13.20px;color:#8a8b8d;transform:scaleX(0.9815);transform-origin:0 0;">Активация Windows</div>
<div class="t" style="left:739.60px;top:487.43px;font-size:9.30px;color:#8a8b8d;transform:scaleX(0.9899);transform-origin:0 0;">Чтобы активировать Windows, перейдите в раздел</div>
<div class="t" style="left:739.60px;top:501.23px;font-size:9.30px;color:#8a8b8d;">&quot;Параметры&quot;.</div>
<div class="a" style="left:0.00px;top:535.00px;width:999.00px;height:27.00px;background:#060608;"></div>
<svg class="a" style="left:10.00px;top:543.40px;" width="11.20" height="10.80" viewBox="0 0 11.20 10.80"><path d="M0 1.5 L5 0.8 L5 5.1 L0 5.1Z M5.8 0.7 L11.2 0 L11.2 5.1 L5.8 5.1Z M0 5.8 L5 5.8 L5 10.1 L0 9.4Z M5.8 5.8 L11.2 5.8 L11.2 10.8 L5.8 10.2Z" fill="#f2f2f2"/></svg>
<svg class="a" style="left:41.00px;top:543.40px;" width="12.00" height="11.50" viewBox="0 0 12.00 11.50"><circle cx="7.4" cy="4.2" r="3.6" stroke="#e0e0e0" stroke-width="1" fill="none"/><path d="M4.8 6.8 L0.6 11" stroke="#e0e0e0" stroke-width="1.1"/></svg>
<svg class="a" style="left:71.00px;top:544.00px;" width="14.40" height="10.40" viewBox="0 0 14.40 10.40"><rect x="3" y="0.5" width="8.4" height="9.4" rx="0.6" stroke="#d8d8d8" stroke-width="0.9" fill="none"/><path d="M2.4 2 L0.5 3 L0.5 7.4 L2.4 8.4 M12 2 L13.9 3 L13.9 7.4 L12 8.4" stroke="#d8d8d8" stroke-width="0.9" fill="none"/></svg>
<svg class="a" style="left:104.00px;top:542.00px;" width="14.50" height="14.00" viewBox="0 0 14.50 14.00"><path d="M0 1.6 L8.6 0 L8.6 14 L0 12.4Z" fill="#d24a2f"/><rect x="7.6" y="2.2" width="6.6" height="9.6" fill="#f6e6dc"/><rect x="9.2" y="4" width="3.6" height="2.4" fill="#d9703a"/><rect x="9.2" y="7.4" width="3.6" height="1" fill="#d9703a"/><path d="M2.4 10 L2.4 4 L4.4 4 Q6.2 4 6.2 5.8 Q6.2 7.6 4.4 7.6 L2.4 7.6" stroke="#fff" stroke-width="1.1" fill="none"/></svg>
<svg class="a" style="left:136.00px;top:541.50px;" width="15.00" height="15.00" viewBox="0 0 15.00 15.00"><defs><linearGradient id="ff" x1="0.8" y1="0" x2="0.2" y2="1"><stop offset="0" stop-color="#ffd54a"/><stop offset="0.45" stop-color="#ff8a2a"/><stop offset="1" stop-color="#e0304a"/></linearGradient></defs><path d="M7.5 15 A7 7 0 0 1 0.6 7.6 Q1 4 3.4 2.4 Q3 4.4 4.2 5.4 Q5 2.2 8.6 0.6 Q8 2.6 9.6 3.4 Q13.6 4.6 14.4 8.4 A7 7 0 0 1 7.5 15Z" fill="url(#ff)"/><circle cx="7.2" cy="8" r="3.1" fill="#5b3fd8"/><circle cx="6.6" cy="7.2" r="1.4" fill="#7a6cf0"/></svg>
<svg class="a" style="left:168.50px;top:542.00px;" width="14.50" height="14.00" viewBox="0 0 14.50 14.00"><path d="M0 1.6 L8.6 0 L8.6 14 L0 12.4Z" fill="#1f7245"/><rect x="7.6" y="2.2" width="6.6" height="9.6" fill="#e4efe8"/><path d="M9.4 3.6 L12.8 3.6 M9.4 6 L12.8 6 M9.4 8.4 L12.8 8.4 M11 3 L11 10" stroke="#1f7245" stroke-width="0.7"/><path d="M2.2 4 L6.2 10 M6.2 4 L2.2 10" stroke="#fff" stroke-width="1.2"/></svg>
<svg class="a" style="left:200.00px;top:540.50px;" width="16.00" height="16.00" viewBox="0 0 16.00 16.00"><circle cx="8" cy="8" r="7.6" fill="#db4437"/><path d="M8 8 L14.6 4.2 A7.6 7.6 0 0 1 8 15.6Z" fill="#f4c20d"/><path d="M8 8 L8 15.6 A7.6 7.6 0 0 1 1.4 4.2Z" fill="#0f9d58"/><circle cx="8" cy="8" r="3.6" fill="#fff"/><circle cx="8" cy="8" r="2.8" fill="#4285f4"/></svg>
<svg class="a" style="left:232.50px;top:542.00px;" width="15.50" height="13.50" viewBox="0 0 15.50 13.50"><path d="M0.5 1 L5.5 1 L7 2.6 L15 2.6 L15 13 L0.5 13Z" fill="#e8b64a"/><rect x="0.5" y="4" width="14.5" height="9" fill="#f6d57c"/><rect x="3" y="6" width="9.5" height="4" fill="#5aa6e0"/></svg>
<svg class="a" style="left:265.00px;top:540.50px;" width="16.00" height="16.00" viewBox="0 0 16.00 16.00"><circle cx="8" cy="8" r="7.6" fill="#db4437"/><path d="M8 8 L14.6 4.2 A7.6 7.6 0 0 1 8 15.6Z" fill="#f4c20d"/><path d="M8 8 L8 15.6 A7.6 7.6 0 0 1 1.4 4.2Z" fill="#0f9d58"/><circle cx="8" cy="8" r="3.6" fill="#fff"/><circle cx="8" cy="8" r="2.8" fill="#4285f4"/><circle cx="12.2" cy="12.4" r="4.4" fill="#2f4a3c"/><text x="12.2" y="14.4" font-size="5.6" text-anchor="middle" fill="#e8e8e8" font-family="Liberation Sans">M</text></svg>
<div class="a" style="left:289.50px;top:535.00px;width:31.50px;height:27.00px;background:#3a3a3d;"></div>
<svg class="a" style="left:296.00px;top:540.50px;" width="17.50" height="17.00" viewBox="0 0 17.50 17.00"><circle cx="8.75" cy="8.5" r="8.4" fill="#2563eb"/><text x="8.75" y="9.6" font-size="3.2" text-anchor="middle" fill="#fff" font-family="Liberation Sans" font-weight="700">zoom</text></svg>
<svg class="a" style="left:329.50px;top:542.00px;" width="14.50" height="14.00" viewBox="0 0 14.50 14.00"><path d="M0 1.6 L8.6 0 L8.6 14 L0 12.4Z" fill="#2b5797"/><rect x="7.6" y="2.2" width="6.6" height="9.6" fill="#e6ecf6"/><path d="M9.4 4 L12.8 4 M9.4 6.2 L12.8 6.2 M9.4 8.4 L12.8 8.4" stroke="#2b5797" stroke-width="0.7"/><path d="M1.6 4 L3 10 L4.3 5.6 L5.6 10 L7 4" stroke="#fff" stroke-width="0.9" fill="none"/></svg>
<div class="a" style="left:227.00px;top:560.60px;width:27.00px;height:1.40px;background:#86b6e8;"></div>
<div class="a" style="left:260.00px;top:560.60px;width:26.00px;height:1.40px;background:#86b6e8;"></div>
<div class="a" style="left:289.50px;top:560.60px;width:31.50px;height:1.40px;background:#86b6e8;"></div>
<div class="a" style="left:324.50px;top:560.60px;width:26.00px;height:1.40px;background:#86b6e8;"></div>
<svg class="a" style="left:837.60px;top:546.20px;" width="8.60" height="5.00" viewBox="0 0 8.60 5.00"><path d="M0.5 4.6 L4.3 0.8 L8.1 4.6" stroke="#e0e0e0" stroke-width="1" fill="none"/></svg>
<svg class="a" style="left:852.00px;top:545.00px;" width="11.50" height="7.00" viewBox="0 0 11.50 7.00"><rect x="0.5" y="1.2" width="9.6" height="5.2" stroke="#e0e0e0" stroke-width="0.8" fill="none"/><rect x="1.6" y="2.2" width="7.4" height="3.2" fill="#e0e0e0"/><rect x="10.4" y="2.6" width="1" height="2.4" fill="#e0e0e0"/><path d="M3 0 L3 1.2" stroke="#e0e0e0" stroke-width="0.8"/></svg>
<svg class="a" style="left:869.00px;top:544.00px;" width="9.00" height="9.00" viewBox="0 0 9.00 9.00"><path d="M0.8 8.4 A7.6 7.6 0 0 1 8.4 0.8 M0.8 8.4 A5.2 5.2 0 0 1 6 3.2 M0.8 8.4 A2.8 2.8 0 0 1 3.6 5.6" stroke="#d8d8d8" stroke-width="0.8" fill="none"/><circle cx="7.4" cy="7.4" r="1" fill="#e0e0e0"/></svg>
<svg class="a" style="left:882.80px;top:544.00px;" width="11.00" height="9.00" viewBox="0 0 11.00 9.00"><path d="M0.5 3 L2.5 3 L5 0.8 L5 8.2 L2.5 6 L0.5 6Z" stroke="#e0e0e0" stroke-width="0.8" fill="none"/><path d="M6.8 2.8 Q8 4.5 6.8 6.2 M8.4 1.6 Q10.4 4.5 8.4 7.4" stroke="#e0e0e0" stroke-width="0.7" fill="none"/></svg>
<div class="t" style="left:900.70px;top:545.80px;font-size:7.80px;color:#ececec;transform:scaleX(0.9052);transform-origin:0 0;">ENG</div>
<div class="a" style="left:919.70px;top:537.00px;width:44.80px;height:25.00px;background:#2b2b2e;"></div>
<div class="t" style="left:933.20px;top:539.80px;font-size:7.80px;color:#ffffff;transform:scaleX(0.9119);transform-origin:0 0;">12:10</div>
<div class="t" style="left:923.60px;top:551.90px;font-size:7.80px;color:#ffffff;transform:scaleX(0.9478);transform-origin:0 0;">03.02.2026</div>
<svg class="a" style="left:971.80px;top:543.50px;" width="11.50" height="11.00" viewBox="0 0 11.50 11.00"><path d="M0.5 0.5 L11 0.5 L11 8 L6.6 8 L5.2 10.4 L3.8 8 L0.5 8Z" stroke="#e8e8e8" stroke-width="0.9" fill="none"/></svg>
<div class="a" style="left:907.80px;top:512.60px;width:69.00px;height:23.00px;background:#f4f4f4;border:1px solid #9a9a9a;"></div>
<div class="t" style="left:911.00px;top:515.73px;font-size:7.40px;color:#5a5a5a;transform:scaleX(1.0214);transform-origin:0 0;">3 февраля 2026 г.</div>
<div class="t" style="left:911.00px;top:526.33px;font-size:7.40px;color:#5a5a5a;transform:scaleX(1.1022);transform-origin:0 0;">вторник</div>
<svg class="a" style="left:128.50px;top:309.00px;" width="7.00" height="10.00" viewBox="0 0 7.00 10.00"><path d="M0.6 0.6 L0.6 8.4 L2.6 6.6 L4 9.4 L5.2 8.8 L3.8 6.2 L6.4 6.2Z" fill="#0c1020" stroke="#d8d8d8" stroke-width="0.6"/></svg>
</body></html>
